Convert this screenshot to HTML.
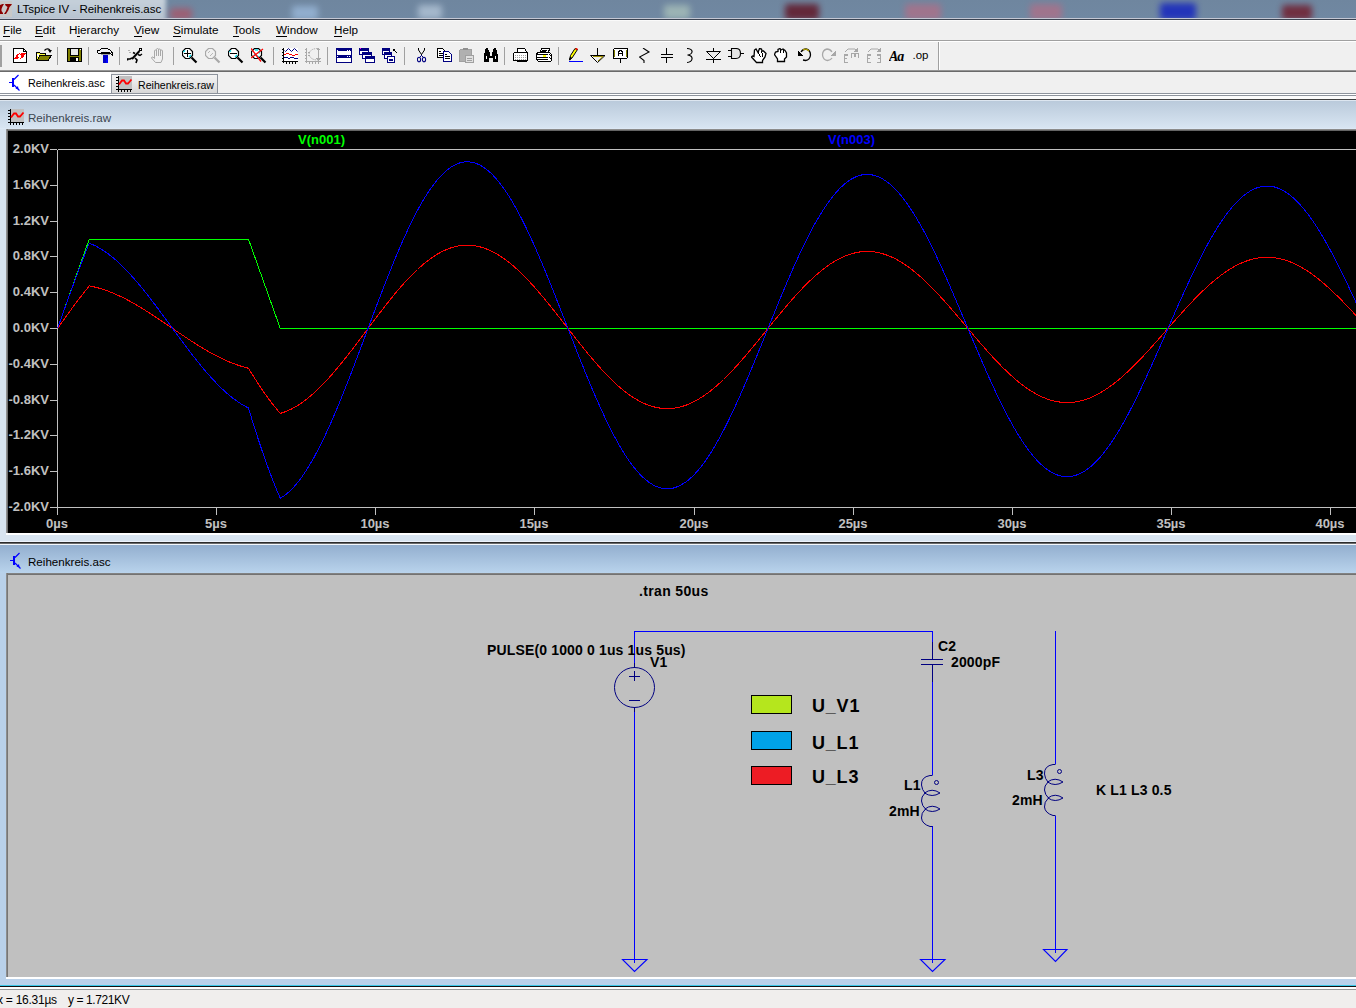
<!DOCTYPE html>
<html><head><meta charset="utf-8">
<style>
*{margin:0;padding:0;box-sizing:border-box}
html,body{width:1356px;height:1008px;overflow:hidden;background:#f0f0f0;font-family:"Liberation Sans",sans-serif}
.abs{position:absolute}
#title{left:0;top:0;width:1356px;height:18px;background:linear-gradient(180deg,#6f869f,#7088a2);overflow:hidden}
.blob{position:absolute;filter:blur(3px);border-radius:3px}
#titletxt{left:17px;top:2px;font-size:11.5px;color:#000;white-space:pre;line-height:14px}
#menubar{left:0;top:20px;width:1356px;height:20px;background:#f0f0f0}
.mi{position:absolute;top:2.9px;font-size:11.7px;line-height:11px;color:#000;white-space:pre}
.mi u{text-decoration:none;border-bottom:1px solid #000}
#toolbar{left:0;top:41px;width:1356px;height:29px;background:#f0f0f0}
.sep{position:absolute;top:6px;width:1px;height:19px;background:#a0a0a0;border-right:1px solid #fff}
.ic{position:absolute;top:7px;width:16px;height:16px}
#tabs{left:0;top:72px;width:1356px;height:21px;background:#f0f0f0}
.yl{position:absolute;left:0;width:49px;text-align:right;font-size:13px;font-weight:bold;color:#c0c0c0;line-height:16px;white-space:pre}
.xl{position:absolute;top:516px;width:80px;text-align:center;font-size:13px;font-weight:bold;color:#c0c0c0;line-height:16px;white-space:pre}
.st{position:absolute;font-size:14px;font-weight:bold;color:#000;white-space:pre;line-height:16px;letter-spacing:0.15px}
</style></head><body>
<!-- title bar -->
<div id="title" class="abs">
  <div class="abs" style="left:-10px;top:-4px;width:176px;height:26px;background:linear-gradient(180deg,#c9d3dd,#b4c1ce);filter:blur(2px)"></div>
  <div class="blob" style="left:170px;top:8px;width:22px;height:12px;background:#c04050;opacity:.55"></div>
  <div class="blob" style="left:292px;top:6px;width:26px;height:14px;background:#a8c8ec;opacity:.6"></div>
  <div class="blob" style="left:418px;top:5px;width:24px;height:14px;background:#c8d8e8;opacity:.6"></div>
  <div class="blob" style="left:664px;top:5px;width:26px;height:14px;background:#c8e0c8;opacity:.5"></div>
  <div class="blob" style="left:785px;top:4px;width:34px;height:16px;background:#601020;opacity:.8"></div>
  <div class="blob" style="left:905px;top:4px;width:36px;height:16px;background:#c06880;opacity:.6"></div>
  <div class="blob" style="left:1030px;top:4px;width:32px;height:16px;background:#c06880;opacity:.6"></div>
  <div class="blob" style="left:1160px;top:3px;width:36px;height:17px;background:#1020c0;opacity:.8"></div>
  <div class="blob" style="left:1282px;top:5px;width:30px;height:15px;background:#701828;opacity:.8"></div>
  <div class="abs" style="left:0;top:1px;width:12px;height:16px;background:#c8c8c8"></div>
  <svg class="abs" style="left:0;top:0" width="13" height="18" viewBox="0 0 13 18"><path d="M2.5,4 H4 L2.5,6.5 L1.5,9 V11 L3,13 V14 H0 V5 Z" fill="#8b0000"/><path d="M5,4 H12 L11,5.5 L9.5,7 L8.5,10 L6,14 H4 L6,11 L7.5,7 L5.5,5.5 Z" fill="#8b0000"/></svg>
  <div id="titletxt" class="abs">LTspice IV - Reihenkreis.asc</div>
</div>
<div class="abs" style="left:0;top:18px;width:1356px;height:1px;background:#c4c8d4"></div>
<div class="abs" style="left:0;top:19px;width:1356px;height:1px;background:#3c4452"></div>
<div class="abs" style="left:0;top:20px;width:1356px;height:1px;background:#fafafa"></div>
<!-- menu -->
<div id="menubar" class="abs" style="top:21px;height:19px">
  <div class="mi" style="left:3px"><u>F</u>ile</div>
  <div class="mi" style="left:35px"><u>E</u>dit</div>
  <div class="mi" style="left:69px">H<u>i</u>erarchy</div>
  <div class="mi" style="left:134px"><u>V</u>iew</div>
  <div class="mi" style="left:173px"><u>S</u>imulate</div>
  <div class="mi" style="left:233px"><u>T</u>ools</div>
  <div class="mi" style="left:276px"><u>W</u>indow</div>
  <div class="mi" style="left:334px"><u>H</u>elp</div>
</div>
<div class="abs" style="left:0;top:40px;width:1356px;height:1px;background:#a0a0a0"></div>
<div class="abs" style="left:0;top:41px;width:1356px;height:1px;background:#ffffff"></div>
<!-- toolbar -->
<div id="toolbar" class="abs" style="top:42px;height:28px">
<div class="abs" style="left:0;top:3px;width:2px;height:22px;background:#a0a0a0"></div>
<svg class="abs" style="left:13px;top:6px" width="16" height="16" viewBox="0 0 16 16" shape-rendering="crispEdges"><path d="M0.5,0.5 H10.5 L13.5,3.5 V14.5 H0.5 Z" fill="#fff" stroke="#000"/><path d="M10.5,0.5 V3.5 H13.5" fill="none" stroke="#000"/><rect x="6" y="5" width="1" height="1" fill="#ff0000"/><rect x="8" y="5" width="5" height="1" fill="#ff0000"/><rect x="4" y="6" width="2" height="1" fill="#ff0000"/><rect x="7" y="6" width="5" height="1" fill="#ff0000"/><rect x="3" y="7" width="2" height="1" fill="#ff0000"/><rect x="8" y="7" width="3" height="1" fill="#ff0000"/><rect x="3" y="8" width="2" height="1" fill="#ff0000"/><rect x="8" y="8" width="3" height="1" fill="#ff0000"/><rect x="2" y="9" width="4" height="1" fill="#ff0000"/><rect x="8" y="9" width="2" height="1" fill="#ff0000"/><rect x="1" y="10" width="4" height="1" fill="#ff0000"/><rect x="7" y="10" width="1" height="1" fill="#ff0000"/></svg>
<svg class="abs" style="left:36px;top:6px" width="16" height="16" viewBox="0 0 16 16" shape-rendering="crispEdges"><path d="M0.5,4.5 H3.5 L4.5,5.5 H9.5 V12.5 H0.5 Z" fill="#ffff40" stroke="#000"/><path d="M1,6 L3,10 M2,6 L3,8" stroke="#fff" fill="none"/><path d="M1,12.5 L4,7.5 H15.5 L12,12.5 Z" fill="#808000" stroke="#000"/><path d="M8.5,2.5 Q11,-0.5 14,2" fill="none" stroke="#000" stroke-width="1.2" shape-rendering="auto"/><path d="M12,2 H16 L14,5 Z" fill="#000" shape-rendering="auto"/></svg>
<div class="abs" style="left:57px;top:5px;width:1px;height:18px;background:#a0a0a0"></div>
<svg class="abs" style="left:67px;top:6px" width="16" height="16" viewBox="0 0 16 16" shape-rendering="crispEdges"><rect x="0.5" y="0.5" width="14" height="13" fill="#808000" stroke="#000"/><rect x="3" y="1" width="9" height="6" fill="#e8e8e8"/><path d="M3.5,1 V7.5 H11.5 V1" fill="none" stroke="#000"/><rect x="3" y="9" width="9" height="5" fill="#000"/><rect x="9" y="10" width="2" height="3" fill="#fff"/><rect x="13" y="1" width="1" height="1" fill="#fff"/></svg>
<div class="abs" style="left:88px;top:5px;width:1px;height:18px;background:#a0a0a0"></div>
<svg class="abs" style="left:97px;top:6px" width="16" height="16" viewBox="0 0 16 16" shape-rendering="crispEdges"><path d="M0.5,2.5 H2.5 L4.5,0.5 H10.5 L13,2 L15.5,5 V7.5 L12.5,4.5 H4.5 L3,5.5 H1.5 L0.5,4.5 Z" fill="#f4f4f4" stroke="#000"/><rect x="4" y="5" width="9" height="2" fill="#a0a0a0"/><path d="M4,5.5 H13" stroke="#000"/><rect x="6" y="7" width="5" height="8" fill="#0000c8"/><rect x="9" y="10" width="2" height="5" fill="#0000ff"/></svg>
<div class="abs" style="left:119px;top:5px;width:1px;height:18px;background:#a0a0a0"></div>
<svg class="abs" style="left:127px;top:6px" width="16" height="16" viewBox="0 0 16 16" shape-rendering="crispEdges"><path d="M12,0.5 H14.5 V2.5 H12 Z" fill="#fff" stroke="#000"/><path d="M12.5,3 L5,11" stroke="#000" stroke-width="2" shape-rendering="auto"/><path d="M8,5.5 L6,4.5" stroke="#000" stroke-width="1.6" shape-rendering="auto"/><path d="M11,6.5 L13,7.5 L15,6" stroke="#000" stroke-width="1.4" fill="none" shape-rendering="auto"/><path d="M5,10 L3,11 H0.5 V12.5" stroke="#000" stroke-width="1.6" fill="none" shape-rendering="auto"/><path d="M8,10 L10,12 L9,15" stroke="#000" stroke-width="1.6" fill="none" shape-rendering="auto"/><path d="M1,3 L3,2 M2,5 L4,4" stroke="#b0b0b0" fill="none"/></svg>
<svg class="abs" style="left:151px;top:6px" width="16" height="16" viewBox="0 0 16 16" shape-rendering="crispEdges"><path d="M4.5,14.5 L0.5,10 L1,9 L2,9 L3.5,10.5 V3 Q3.5,2 4.5,2 Q5.5,2 5.5,3 V1.5 Q5.5,0.5 6.5,0.5 Q7.5,0.5 7.5,1.5 V2 Q7.5,1 8.5,1 Q9.5,1 9.5,2 V3 Q9.5,2 10.5,2 Q11.5,2 11.5,3 V11 L10,14.5 Z M5.5,3 V8 M7.5,2 V8 M9.5,3 V8" fill="none" stroke="#a8a8a8" shape-rendering="auto"/></svg>
<div class="abs" style="left:173px;top:5px;width:1px;height:18px;background:#a0a0a0"></div>
<svg class="abs" style="left:182px;top:6px" width="16" height="16" viewBox="0 0 16 16" shape-rendering="crispEdges"><path d="M3.5,0.5 H7.5 L10.5,3.5 V7.5 L7.5,10.5 H3.5 L0.5,7.5 V3.5 Z" fill="#fff" stroke="#000" stroke-width="1.2" shape-rendering="auto"/><path d="M2,5.5 H9 M5.5,2 V9" stroke="#000" stroke-width="1.2"/><path d="M1.5,4 L3,2.5 M7,9 L9,7" stroke="#00e0f0" stroke-width="1.2" shape-rendering="auto"/><path d="M9.5,9.5 L14.5,14.5" stroke="#000" stroke-width="2.2" shape-rendering="auto"/></svg>
<svg class="abs" style="left:205px;top:6px" width="16" height="16" viewBox="0 0 16 16" shape-rendering="crispEdges"><path d="M3.5,0.5 H7.5 L10.5,3.5 V7.5 L7.5,10.5 H3.5 L0.5,7.5 V3.5 Z" fill="none" stroke="#a8a8a8" stroke-width="1.2" shape-rendering="auto"/><path d="M3,5 L5,3 M5,8 L8,5" stroke="#b8b8b8" shape-rendering="auto"/><path d="M9.5,9.5 L14.5,14.5" stroke="#a8a8a8" stroke-width="2.2" shape-rendering="auto"/></svg>
<svg class="abs" style="left:228px;top:6px" width="16" height="16" viewBox="0 0 16 16" shape-rendering="crispEdges"><path d="M3.5,0.5 H7.5 L10.5,3.5 V7.5 L7.5,10.5 H3.5 L0.5,7.5 V3.5 Z" fill="#fff" stroke="#000" stroke-width="1.2" shape-rendering="auto"/><path d="M2,5.5 H9" stroke="#000" stroke-width="1.4"/><path d="M1.5,4 L3,2.5 M7,9 L9,7" stroke="#00e0f0" stroke-width="1.2" shape-rendering="auto"/><path d="M9.5,9.5 L14.5,14.5" stroke="#000" stroke-width="2.2" shape-rendering="auto"/></svg>
<svg class="abs" style="left:251px;top:6px" width="16" height="16" viewBox="0 0 16 16" shape-rendering="crispEdges"><path d="M3.5,0.5 H7.5 L10.5,3.5 V7.5 L7.5,10.5 H3.5 L0.5,7.5 V3.5 Z" fill="#fff" stroke="#000" stroke-width="1.2" shape-rendering="auto"/><path d="M4,2 L7,2 M3,6 L8,9 M7,4 L9,5" stroke="#00e0f0" stroke-width="1.4" shape-rendering="auto"/><path d="M0,0.5 L10,13.5 M12,1 L0,10" stroke="#ff0000" stroke-width="1.3" shape-rendering="auto"/><path d="M9.5,9.5 L14.5,14.5" stroke="#000" stroke-width="2.2" shape-rendering="auto"/></svg>
<div class="abs" style="left:273px;top:5px;width:1px;height:18px;background:#a0a0a0"></div>
<svg class="abs" style="left:282px;top:6px" width="16" height="16" viewBox="0 0 16 16" shape-rendering="crispEdges"><rect x="2" y="0" width="14" height="13" fill="#fff"/><path d="M1.5,0 V14.5 M0,13.5 H16" stroke="#000" stroke-width="1.4"/><path d="M0,1.5 H1 M0,4.5 H1 M0,7.5 H1 M0,10.5 H1 M4.5,14 V15.5 M7.5,14 V15.5 M10.5,14 V15.5 M13.5,14 V15.5" stroke="#000"/><path d="M2.5,2.5 L3.5,3.5 L6.5,0.5 L9.5,3.5 L12.5,0.5 L15.5,3.5" stroke="#000080" fill="none" shape-rendering="auto"/><path d="M2,6 H4 V5 H7 V6 H10 V7 H13 V6 H16 V7 H13 V8 H10 V7 H7 V6 H4 V7 H2 Z" fill="#ff0000"/><path d="M2,9 H6 V10 H8 V9 H12 V10 H16 V11 H12 V10 H8 V11 H6 V10 H2 Z" fill="#000080"/></svg>
<svg class="abs" style="left:305px;top:6px" width="16" height="16" viewBox="0 0 16 16" shape-rendering="crispEdges"><path d="M1.5,0 V14.5 M0,13.5 H16" stroke="#a8a8a8" stroke-width="1.4"/><path d="M0,1.5 H1 M0,4.5 H1 M0,7.5 H1 M0,10.5 H1 M4.5,14 V15.5 M7.5,14 V15.5 M10.5,14 V15.5 M13.5,14 V15.5" stroke="#a8a8a8"/><path d="M13,0.5 Q5,0.5 4,6 Q5,12 13,12" stroke="#a8a8a8" fill="none" stroke-dasharray="1.5,1" shape-rendering="auto"/><path d="M13.5,0.5 V12 M11.5,2.5 L13.5,0.5 L15.5,2.5 M11.5,10 L13.5,12 L15.5,10 M3,5 L4,4 L5,5 M3,7 L4,8 L5,7" stroke="#a8a8a8" fill="none" stroke-width="1.2"/></svg>
<div class="abs" style="left:327px;top:5px;width:1px;height:18px;background:#a0a0a0"></div>
<svg class="abs" style="left:336px;top:6px" width="16" height="16" viewBox="0 0 16 16" shape-rendering="crispEdges"><rect x="0.5" y="0.5" width="15" height="14" fill="#fff" stroke="#000080"/><rect x="1" y="1" width="14" height="2" fill="#000080"/><rect x="1" y="7" width="14" height="3" fill="#000080"/><path d="M1.5,8 V9 M13.5,8 V9 M11.5,8 V9" stroke="#fff"/><path d="M1.5,1.5 V2.5 M13.5,1.5 V2.5 M11.5,1.5 V2.5" stroke="#fff"/></svg>
<svg class="abs" style="left:359px;top:6px" width="16" height="16" viewBox="0 0 16 16" shape-rendering="crispEdges"><rect x="0.5" y="0.5" width="9" height="6" fill="#fff" stroke="#000080"/><rect x="1" y="1" width="8" height="2" fill="#000080"/><rect x="3.5" y="4.5" width="9" height="6" fill="#fff" stroke="#000080"/><rect x="4" y="5" width="8" height="2" fill="#000080"/><rect x="6.5" y="8.5" width="9" height="6" fill="#fff" stroke="#000080"/><rect x="7" y="9" width="8" height="2" fill="#000080"/><rect x="1" y="0" width="1" height="1" fill="#f0f"/></svg>
<svg class="abs" style="left:382px;top:6px" width="16" height="16" viewBox="0 0 16 16" shape-rendering="crispEdges"><rect x="0.5" y="0.5" width="7" height="6" fill="#fff" stroke="#000080"/><rect x="1" y="1" width="6" height="2" fill="#000080"/><rect x="2.5" y="4.5" width="7" height="6" fill="#fff" stroke="#000080"/><rect x="3" y="5" width="6" height="2" fill="#000080"/><rect x="5.5" y="8.5" width="7" height="6" fill="#fff" stroke="#000080"/><rect x="7" y="11" width="4" height="2" fill="#000080"/><path d="M11,1 L15,5 M11,1 H13 M11,1 V3" stroke="#000" fill="none"/></svg>
<div class="abs" style="left:404px;top:5px;width:1px;height:18px;background:#a0a0a0"></div>
<svg class="abs" style="left:417px;top:6px" width="16" height="16" viewBox="0 0 16 16" shape-rendering="crispEdges"><path d="M1.5,0 V2 L4.5,6.5 L7.5,2 V0" stroke="#000" fill="none" shape-rendering="auto"/><path d="M4.5,6 V8" stroke="#000"/><ellipse cx="2" cy="11.5" rx="1.6" ry="2.3" fill="none" stroke="#000080" stroke-width="1.1" shape-rendering="auto"/><ellipse cx="7" cy="11.5" rx="1.6" ry="2.3" fill="none" stroke="#000080" stroke-width="1.1" shape-rendering="auto"/><path d="M3,9 L4.5,7.5 L6,9" stroke="#000080" fill="none"/></svg>
<svg class="abs" style="left:437px;top:6px" width="16" height="16" viewBox="0 0 16 16" shape-rendering="crispEdges"><path d="M0.5,0.5 H5.5 L7.5,2.5 V9.5 H0.5 Z" fill="#fff" stroke="#000"/><path d="M2,3.5 H4 M2,5.5 H6 M2,7.5 H6" stroke="#000"/><path d="M6.5,3.5 H11.5 L14.5,6.5 V13.5 H6.5 Z" fill="#fff" stroke="#000080"/><path d="M8,6.5 H10 M8,8.5 H13 M8,10.5 H13" stroke="#000"/></svg>
<svg class="abs" style="left:459px;top:6px" width="16" height="16" viewBox="0 0 16 16" shape-rendering="crispEdges"><rect x="0.5" y="1.5" width="12" height="12" rx="1.5" fill="#b0b0b0" stroke="#a0a0a0"/><rect x="4" y="0" width="5" height="2" fill="#909090"/><rect x="6.5" y="7.5" width="8" height="7" fill="#e0e0e0" stroke="#a0a0a0"/><path d="M8,10.5 H13 M8,12.5 H13" stroke="#a0a0a0"/></svg>
<svg class="abs" style="left:483px;top:6px" width="16" height="16" viewBox="0 0 16 16" shape-rendering="crispEdges"><path d="M2,3 L3,0 H5 L6,3 L7,5 V8 H9 V5 L10,3 L11,0 H13 L14,3 L15,8 V14 H10 V10 H6 V14 H1 V8 Z" fill="#000"/><path d="M3.5,8 V11 M12.5,8 V11 M7.5,6 V7" stroke="#fff"/></svg>
<div class="abs" style="left:504px;top:5px;width:1px;height:18px;background:#a0a0a0"></div>
<svg class="abs" style="left:513px;top:6px" width="16" height="16" viewBox="0 0 16 16" shape-rendering="crispEdges"><path d="M4.5,0.5 H11.5 L13.5,3.5 V4.5 H4.5 Z" fill="#fff" stroke="#000"/><path d="M1.5,4.5 H14.5 V12.5 H0.5 V6 Z" fill="#fff" stroke="#000"/><path d="M2,7 H14 M2,9 H14 M2,11 H14" stroke="#a0a0a0" stroke-dasharray="1,1"/><rect x="4" y="13" width="10" height="1" fill="#000"/></svg>
<svg class="abs" style="left:536px;top:6px" width="16" height="16" viewBox="0 0 16 16" shape-rendering="crispEdges"><path d="M4,4.5 L5.5,0.5 H13.5 V1.5 L12,4.5" fill="#fff" stroke="#000"/><path d="M6,2.5 H11 M5,3.5 H10" stroke="#000"/><path d="M1.5,4.5 H13.5 L15.5,6.5 V12.5 L14,13.5 H2.5 L0.5,11.5 V6.5 Z" fill="#fff" stroke="#000"/><path d="M1,6.5 H12 M1,9.5 H12 M1,11.5 H12" stroke="#000"/><rect x="7" y="7" width="3" height="2" fill="#ffff00"/><path d="M13,6 L15,8 M13,9 L15,11" stroke="#000" stroke-dasharray="1,1"/></svg>
<div class="abs" style="left:558px;top:5px;width:1px;height:18px;background:#a0a0a0"></div>
<svg class="abs" style="left:569px;top:6px" width="16" height="16" viewBox="0 0 16 16" shape-rendering="crispEdges"><path d="M0.5,12 L1.5,7.5 L6,0.5 L8.5,1.5 L3,10 Z" fill="#ffff00" stroke="#000" shape-rendering="auto"/><path d="M6.5,0.5 L8.5,1.5" stroke="#f00" stroke-width="1.5" shape-rendering="auto"/><path d="M0.5,12 L2,9" stroke="#000" stroke-width="1.5" shape-rendering="auto"/><path d="M0,13.5 H14" stroke="#0000ff"/></svg>
<svg class="abs" style="left:590px;top:6px" width="16" height="16" viewBox="0 0 16 16" shape-rendering="crispEdges"><path d="M7.5,0 V7" stroke="#000"/><path d="M0.5,7.5 H15 L7.5,14.5 Z" fill="none" stroke="#000" shape-rendering="auto"/><path d="M3,8.5 H13 L8,13" fill="none" stroke="#a09000" shape-rendering="auto"/></svg>
<svg class="abs" style="left:613px;top:6px" width="16" height="16" viewBox="0 0 16 16" shape-rendering="crispEdges"><rect x="0.5" y="0.5" width="14" height="10" rx="1.5" fill="#fff" stroke="#000"/><rect x="1" y="2" width="1" height="7" fill="#808000"/><rect x="13" y="2" width="1" height="7" fill="#808000"/><path d="M5.5,8 V4 L7.5,2.5 L9.5,4 V8 M5.5,5.5 H9.5" stroke="#000" fill="none" stroke-width="1.3"/><path d="M7.5,11 V15" stroke="#000"/></svg>
<svg class="abs" style="left:639px;top:6px" width="16" height="16" viewBox="0 0 16 16" shape-rendering="crispEdges"><path d="M4,0 L10,4 L0.5,9 L5,12.5 V15" stroke="#000" fill="none" stroke-width="1.1" shape-rendering="auto"/></svg>
<svg class="abs" style="left:661px;top:6px" width="16" height="16" viewBox="0 0 16 16" shape-rendering="crispEdges"><path d="M5.5,0 V6 M5.5,9 V15 M0,6.5 H12 M0,9.5 H12" stroke="#000" stroke-width="1.2"/></svg>
<svg class="abs" style="left:687px;top:6px" width="16" height="16" viewBox="0 0 16 16" shape-rendering="crispEdges"><path d="M0,0.5 Q5.5,1 5,4 Q4.5,6.5 0.5,7 Q5.5,7.5 5,11 Q4.5,14 0,14.5" stroke="#000" fill="none" stroke-width="1.2" shape-rendering="auto"/></svg>
<svg class="abs" style="left:706px;top:6px" width="16" height="16" viewBox="0 0 16 16" shape-rendering="crispEdges"><path d="M7.5,0 V15 M0,11.5 H15" stroke="#000"/><path d="M0.5,3.5 H14.5 L7.5,10.5 Z" fill="#e8e8e8" stroke="#000" shape-rendering="auto"/></svg>
<svg class="abs" style="left:728px;top:6px" width="16" height="16" viewBox="0 0 16 16" shape-rendering="crispEdges"><path d="M3.5,0.5 H8 Q12.5,0.5 12.5,5.5 Q12.5,10.5 8,10.5 H3.5 Z" fill="#e4e4e4" stroke="#000" stroke-width="1.1" shape-rendering="auto"/><path d="M0,2.5 H3 M0,8.5 H3 M12.5,5.5 H16" stroke="#000"/></svg>
<svg class="abs" style="left:751px;top:6px" width="16" height="16" viewBox="0 0 16 16" shape-rendering="crispEdges"><path d="M5.5,14.5 L0.5,9 L1.5,8 L3,8.5 L3.5,2 L5,1 L7,4.5 L8.5,0.5 L10.5,1 L11,3 L12.5,3 L15,5.5 L14,9 L11.5,12.5 V14.5 Z" fill="#fff" stroke="#000" stroke-width="1.3" shape-rendering="auto"/><path d="M7,4.5 L9.5,9 M10.5,3 L12,9" stroke="#000" fill="none"/></svg>
<svg class="abs" style="left:774px;top:6px" width="16" height="16" viewBox="0 0 16 16" shape-rendering="crispEdges"><path d="M3.5,13.5 V11 L0.5,6.5 L1.5,4 L4,3.5 V1.5 L6,0.5 L7,2 L9,1 L11,2.5 L12.5,5 V9 L10.5,11 V13.5 Z" fill="#fff" stroke="#000" stroke-width="1.3" shape-rendering="auto"/><path d="M6,2 V5 M9,2 V5" stroke="#000"/></svg>
<svg class="abs" style="left:797px;top:6px" width="16" height="16" viewBox="0 0 16 16" shape-rendering="crispEdges"><path d="M4,4 Q6,1 9,1 Q13.5,2 13.5,7 Q13,12 8.5,12.5 L6,12" stroke="#000" fill="none" stroke-width="1.3" shape-rendering="auto"/><path d="M6,2 Q9,0 12,3" stroke="#b0a000" fill="none" stroke-width="1.3" shape-rendering="auto"/><path d="M0.5,2.5 V7.5 H5.5 Z" fill="#000"/></svg>
<svg class="abs" style="left:820px;top:6px" width="16" height="16" viewBox="0 0 16 16" shape-rendering="crispEdges"><path d="M12,4 Q10,1 7,1 Q2.5,2 2.5,7 Q3,12 7.5,12.5 Q11,12 12,10" stroke="#a8a8a8" fill="none" stroke-width="1.3" shape-rendering="auto"/><path d="M15.5,2.5 V7.5 H10.5 Z" fill="#a8a8a8"/></svg>
<svg class="abs" style="left:843px;top:6px" width="16" height="16" viewBox="0 0 16 16" shape-rendering="crispEdges"><path d="M5,7 H1.5 V14.5 H5 M1.5,10.5 H4" stroke="#a8a8a8" fill="none" stroke-width="1.6"/><path d="M8.5,10 V5.5 H15.5 V10 M12,5.5 V8.5" stroke="#a8a8a8" fill="none" stroke-width="1.6"/><path d="M2,4 L5,1 H12 L13,2" stroke="#a8a8a8" fill="none" shape-rendering="auto"/><path d="M11,3.5 H15 V0 Z" fill="#a8a8a8"/></svg>
<svg class="abs" style="left:866px;top:6px" width="16" height="16" viewBox="0 0 16 16" shape-rendering="crispEdges"><path d="M5,7 H1.5 V14.5 H5 M1.5,10.5 H4" stroke="#a8a8a8" fill="none" stroke-width="1.6"/><path d="M11,7 H14.5 V14.5 H11 M14.5,10.5 H12" stroke="#a8a8a8" fill="none" stroke-width="1.6"/><path d="M2,4 L5,1 H12 L13,2" stroke="#a8a8a8" fill="none" shape-rendering="auto"/><path d="M11,3.5 H15 V0 Z" fill="#a8a8a8"/></svg>
<svg class="abs" style="left:889px;top:6px" width="16" height="16" viewBox="0 0 16 16" shape-rendering="crispEdges"><text x="0" y="13" font-family="Liberation Serif" font-style="italic" font-weight="bold" font-size="14" fill="#000" shape-rendering="auto" letter-spacing="-1.2">Aa</text></svg>
<svg class="abs" style="left:912px;top:6px" width="18" height="16" viewBox="0 0 18 16" shape-rendering="crispEdges"><text x="0.5" y="11" font-family="Liberation Sans" font-size="11.5" fill="#000" shape-rendering="auto">.op</text></svg>
<div class="abs" style="left:938px;top:0;width:1px;height:28px;background:#a0a0a0"></div><div class="abs" style="left:939px;top:0;width:1px;height:28px;background:#fff"></div>
</div>
<div class="abs" style="left:0;top:70px;width:1356px;height:1px;background:#959595"></div>
<div class="abs" style="left:0;top:71px;width:1356px;height:1px;background:#6a6a6a"></div>
<!-- tabs -->
<div id="tabs" class="abs">
<div class="abs" style="left:0;top:0;width:111px;height:23px;background:#fff"></div><svg class="abs" style="left:8px;top:2px" width="13" height="17" viewBox="0 0 13 17" shape-rendering="crispEdges"><rect x="4" y="4" width="2" height="9" fill="#0000ff"/><path d="M1,8.5 H4" stroke="#0000ff" stroke-width="1.2"/><path d="M6,5.5 L10.5,1 M6,11 L11.5,16.5" stroke="#0000ff" stroke-width="1.2" shape-rendering="auto"/><path d="M7.5,14.5 L10.5,15.5 L10,12 Z" fill="#0000ff" shape-rendering="auto"/></svg><div class="abs" style="left:28px;top:5px;font-size:10.8px;line-height:13px;color:#000;white-space:pre">Reihenkreis.asc</div><div class="abs" style="left:111px;top:2px;width:107px;height:19px;background:linear-gradient(180deg,#f4f4f4,#d8d8d8);border:1px solid #8d939c;border-bottom:none"></div><svg class="abs" style="left:116px;top:3px" width="17" height="17" viewBox="0 0 17 17" shape-rendering="crispEdges"><rect x="3" y="1" width="13" height="13" fill="#c0c0c0"/><path d="M2.5,1 V15 M0,14.5 H16" stroke="#000" fill="none"/><path d="M0,2.5 H2 M0,5.5 H2 M0,8.5 H2 M0,11.5 H2 M2.5,15 V17 M5.5,15 V17 M8.5,15 V17 M11.5,15 V17 M14.5,15 V17" stroke="#000"/><path d="M3,9.5 L6,5.5 H8 L10,8.5 H12 L15.5,4.5" stroke="#ff0000" stroke-width="1.8" fill="none" shape-rendering="auto"/></svg><div class="abs" style="left:138px;top:7px;font-size:10.6px;line-height:13px;color:#000;white-space:pre">Reihenkreis.raw</div>
</div>
<div class="abs" style="left:0;top:93px;width:1356px;height:1px;background:#8d939c"></div>
<div class="abs" style="left:0;top:94px;width:1356px;height:1px;background:#ffffff"></div>
<div class="abs" style="left:0;top:95px;width:1356px;height:1px;background:#8d939c"></div>
<div class="abs" style="left:0;top:96px;width:1356px;height:3px;background:#fbfbfb"></div>
<div class="abs" style="left:0;top:99px;width:1356px;height:1px;background:#404040"></div>
<!-- plot child -->
<div class="abs" style="left:0;top:100px;width:1356px;height:1px;background:#dde6f0"></div>
<div class="abs" style="left:0;top:101px;width:1356px;height:27px;background:linear-gradient(180deg,#bacadb,#d8e5f2)"></div>
<div class="abs" style="left:0;top:128px;width:1356px;height:1px;background:#dce8f5"></div>
<div class="abs" style="left:0;top:129px;width:1356px;height:406px;background:#d8e4f0"></div>
<div class="abs" style="left:6px;top:129px;width:1350px;height:2px;background:linear-gradient(180deg,#a0a0a0,#505050)"></div>
<div class="abs" style="left:6px;top:129px;width:2px;height:404px;background:linear-gradient(90deg,#a0a0a0,#606060)"></div>
<div class="abs" style="left:6px;top:533px;width:1350px;height:2px;background:#ffffff"></div>
<svg class="abs" style="left:8px;top:108px" width="17" height="17" viewBox="0 0 17 17" shape-rendering="crispEdges"><rect x="3" y="1" width="13" height="13" fill="#c0c0c0"/><path d="M2.5,1 V15 M0,14.5 H16" stroke="#000" fill="none"/><path d="M0,2.5 H2 M0,5.5 H2 M0,8.5 H2 M0,11.5 H2 M2.5,15 V17 M5.5,15 V17 M8.5,15 V17 M11.5,15 V17 M14.5,15 V17" stroke="#000"/><path d="M3,9.5 L6,5.5 H8 L10,8.5 H12 L15.5,4.5" stroke="#ff0000" stroke-width="1.8" fill="none" shape-rendering="auto"/></svg>
<div class="abs" style="left:28px;top:110.8px;font-size:11.6px;line-height:14px;color:#3c4650;white-space:pre">Reihenkreis.raw</div>
<div class="abs" style="left:8px;top:131px;width:1348px;height:402px;background:#000;overflow:hidden">
  <svg class="abs" style="left:-8px;top:-131px" width="1356" height="540" shape-rendering="crispEdges">
  <path d="M57.5,149.5 H1356 M57.5,507.5 H1356 M57.5,149.5 V514" stroke="#c0c0c0" stroke-width="1" fill="none"/>
<path d="M50,149.5 H57" stroke="#c0c0c0" stroke-width="1"/>
<path d="M50,185.5 H57" stroke="#c0c0c0" stroke-width="1"/>
<path d="M50,221.5 H57" stroke="#c0c0c0" stroke-width="1"/>
<path d="M50,256.5 H57" stroke="#c0c0c0" stroke-width="1"/>
<path d="M50,292.5 H57" stroke="#c0c0c0" stroke-width="1"/>
<path d="M50,328.5 H57" stroke="#c0c0c0" stroke-width="1"/>
<path d="M50,364.5 H57" stroke="#c0c0c0" stroke-width="1"/>
<path d="M50,400.5 H57" stroke="#c0c0c0" stroke-width="1"/>
<path d="M50,435.5 H57" stroke="#c0c0c0" stroke-width="1"/>
<path d="M50,471.5 H57" stroke="#c0c0c0" stroke-width="1"/>
<path d="M50,507.5 H57" stroke="#c0c0c0" stroke-width="1"/>
<path d="M57.5,507 V515" stroke="#c0c0c0" stroke-width="1"/>
<path d="M216.5,507 V515" stroke="#c0c0c0" stroke-width="1"/>
<path d="M375.5,507 V515" stroke="#c0c0c0" stroke-width="1"/>
<path d="M534.5,507 V515" stroke="#c0c0c0" stroke-width="1"/>
<path d="M694.5,507 V515" stroke="#c0c0c0" stroke-width="1"/>
<path d="M853.5,507 V515" stroke="#c0c0c0" stroke-width="1"/>
<path d="M1012.5,507 V515" stroke="#c0c0c0" stroke-width="1"/>
<path d="M1171.5,507 V515" stroke="#c0c0c0" stroke-width="1"/>
<path d="M1330.5,507 V515" stroke="#c0c0c0" stroke-width="1"/>
<path d="M57.5,328.5 L89.3,239.0 L248.4,239.0 L280.3,328.5 L1360,328.5" stroke="#00ff00" stroke-width="1" fill="none"/>
<path d="M57.5,328.5 L58.5,327.1 L59.5,325.7 L60.5,324.3 L61.5,322.9 L62.5,321.5 L63.5,320.1 L64.5,318.7 L65.5,317.3 L66.5,315.9 L67.5,314.5 L68.5,313.1 L69.5,311.8 L70.5,310.4 L71.5,309.0 L72.5,307.7 L73.5,306.3 L74.5,305.0 L75.5,303.6 L76.5,302.3 L77.5,300.9 L78.5,299.6 L79.5,298.3 L80.5,297.0 L81.5,295.7 L82.5,294.4 L83.5,293.1 L84.5,291.9 L85.5,290.6 L86.5,289.3 L87.5,288.1 L88.5,286.9 L89.3,285.9 L89.5,285.9 L90.5,286.1 L91.5,286.3 L92.5,286.5 L93.5,286.7 L94.5,287.0 L95.5,287.2 L96.5,287.5 L97.5,287.7 L98.5,288.0 L99.5,288.3 L100.5,288.6 L101.5,288.9 L102.5,289.2 L103.5,289.5 L104.5,289.9 L105.5,290.2 L106.5,290.6 L107.5,290.9 L108.5,291.3 L109.5,291.7 L110.5,292.1 L111.5,292.5 L112.5,292.9 L113.5,293.3 L114.5,293.7 L115.5,294.2 L116.5,294.6 L117.5,295.1 L118.5,295.5 L119.5,296.0 L120.5,296.5 L121.5,296.9 L122.5,297.4 L123.5,297.9 L124.5,298.4 L125.5,298.9 L126.5,299.4 L127.5,300.0 L128.5,300.5 L129.5,301.0 L130.5,301.6 L131.5,302.1 L132.5,302.7 L133.5,303.3 L134.5,303.8 L135.5,304.4 L136.5,305.0 L137.5,305.6 L138.5,306.2 L139.5,306.8 L140.5,307.4 L141.5,308.0 L142.5,308.6 L143.5,309.2 L144.5,309.8 L145.5,310.5 L146.5,311.1 L147.5,311.7 L148.5,312.4 L149.5,313.0 L150.5,313.6 L151.5,314.3 L152.5,314.9 L153.5,315.6 L154.5,316.3 L155.5,316.9 L156.5,317.6 L157.5,318.2 L158.5,318.9 L159.5,319.6 L160.5,320.3 L161.5,320.9 L162.5,321.6 L163.5,322.3 L164.5,323.0 L165.5,323.6 L166.5,324.3 L167.5,325.0 L168.5,325.7 L169.5,326.4 L170.5,327.1 L171.5,327.7 L172.5,328.4 L173.5,329.1 L174.5,329.8 L175.5,330.5 L176.5,331.1 L177.5,331.8 L178.5,332.5 L179.5,333.2 L180.5,333.9 L181.5,334.5 L182.5,335.2 L183.5,335.9 L184.5,336.5 L185.5,337.2 L186.5,337.9 L187.5,338.5 L188.5,339.2 L189.5,339.8 L190.5,340.5 L191.5,341.1 L192.5,341.8 L193.5,342.4 L194.5,343.1 L195.5,343.7 L196.5,344.3 L197.5,345.0 L198.5,345.6 L199.5,346.2 L200.5,346.8 L201.5,347.4 L202.5,348.0 L203.5,348.6 L204.5,349.2 L205.5,349.8 L206.5,350.4 L207.5,351.0 L208.5,351.5 L209.5,352.1 L210.5,352.7 L211.5,353.2 L212.5,353.8 L213.5,354.3 L214.5,354.8 L215.5,355.4 L216.5,355.9 L217.5,356.4 L218.5,356.9 L219.5,357.4 L220.5,357.9 L221.5,358.4 L222.5,358.9 L223.5,359.3 L224.5,359.8 L225.5,360.2 L226.5,360.7 L227.5,361.1 L228.5,361.6 L229.5,362.0 L230.5,362.4 L231.5,362.8 L232.5,363.2 L233.5,363.6 L234.5,363.9 L235.5,364.3 L236.5,364.7 L237.5,365.0 L238.5,365.4 L239.5,365.7 L240.5,366.0 L241.5,366.3 L242.5,366.6 L243.5,366.9 L244.5,367.2 L245.5,367.5 L246.5,367.8 L247.5,368.0 L248.4,368.2 L248.5,368.3 L249.5,370.0 L250.5,371.6 L251.5,373.2 L252.5,374.8 L253.5,376.4 L254.5,378.0 L255.5,379.6 L256.5,381.1 L257.5,382.7 L258.5,384.2 L259.5,385.7 L260.5,387.2 L261.5,388.7 L262.5,390.2 L263.5,391.6 L264.5,393.1 L265.5,394.5 L266.5,395.9 L267.5,397.3 L268.5,398.7 L269.5,400.0 L270.5,401.3 L271.5,402.7 L272.5,404.0 L273.5,405.2 L274.5,406.5 L275.5,407.7 L276.5,408.9 L277.5,410.1 L278.5,411.3 L279.5,412.5 L280.3,413.4 L280.5,413.3 L281.5,413.0 L282.5,412.7 L283.5,412.4 L284.5,412.0 L285.5,411.6 L286.5,411.2 L287.5,410.8 L288.5,410.4 L289.5,409.9 L290.5,409.5 L291.5,409.0 L292.5,408.4 L293.5,407.9 L294.5,407.4 L295.5,406.8 L296.5,406.2 L297.5,405.6 L298.5,405.0 L299.5,404.3 L300.5,403.6 L301.5,403.0 L302.5,402.3 L303.5,401.5 L304.5,400.8 L305.5,400.0 L306.5,399.3 L307.5,398.5 L308.5,397.7 L309.5,396.8 L310.5,396.0 L311.5,395.1 L312.5,394.3 L313.5,393.4 L314.5,392.5 L315.5,391.6 L316.5,390.6 L317.5,389.7 L318.5,388.7 L319.5,387.7 L320.5,386.7 L321.5,385.7 L322.5,384.7 L323.5,383.7 L324.5,382.6 L325.5,381.6 L326.5,380.5 L327.5,379.4 L328.5,378.3 L329.5,377.2 L330.5,376.1 L331.5,374.9 L332.5,373.8 L333.5,372.6 L334.5,371.5 L335.5,370.3 L336.5,369.1 L337.5,367.9 L338.5,366.7 L339.5,365.5 L340.5,364.3 L341.5,363.0 L342.5,361.8 L343.5,360.6 L344.5,359.3 L345.5,358.0 L346.5,356.8 L347.5,355.5 L348.5,354.2 L349.5,352.9 L350.5,351.7 L351.5,350.4 L352.5,349.1 L353.5,347.7 L354.5,346.4 L355.5,345.1 L356.5,343.8 L357.5,342.5 L358.5,341.2 L359.5,339.8 L360.5,338.5 L361.5,337.2 L362.5,335.8 L363.5,334.5 L364.5,333.2 L365.5,331.8 L366.5,330.5 L367.5,329.2 L368.5,327.8 L369.5,326.5 L370.5,325.2 L371.5,323.8 L372.5,322.5 L373.5,321.2 L374.5,319.9 L375.5,318.5 L376.5,317.2 L377.5,315.9 L378.5,314.6 L379.5,313.3 L380.5,312.0 L381.5,310.7 L382.5,309.4 L383.5,308.1 L384.5,306.8 L385.5,305.5 L386.5,304.2 L387.5,303.0 L388.5,301.7 L389.5,300.5 L390.5,299.2 L391.5,298.0 L392.5,296.7 L393.5,295.5 L394.5,294.3 L395.5,293.1 L396.5,291.9 L397.5,290.7 L398.5,289.6 L399.5,288.4 L400.5,287.2 L401.5,286.1 L402.5,285.0 L403.5,283.8 L404.5,282.7 L405.5,281.6 L406.5,280.5 L407.5,279.5 L408.5,278.4 L409.5,277.4 L410.5,276.3 L411.5,275.3 L412.5,274.3 L413.5,273.3 L414.5,272.3 L415.5,271.3 L416.5,270.4 L417.5,269.5 L418.5,268.5 L419.5,267.6 L420.5,266.7 L421.5,265.9 L422.5,265.0 L423.5,264.1 L424.5,263.3 L425.5,262.5 L426.5,261.7 L427.5,260.9 L428.5,260.2 L429.5,259.4 L430.5,258.7 L431.5,258.0 L432.5,257.3 L433.5,256.6 L434.5,256.0 L435.5,255.3 L436.5,254.7 L437.5,254.1 L438.5,253.5 L439.5,253.0 L440.5,252.4 L441.5,251.9 L442.5,251.4 L443.5,250.9 L444.5,250.4 L445.5,250.0 L446.5,249.5 L447.5,249.1 L448.5,248.7 L449.5,248.4 L450.5,248.0 L451.5,247.7 L452.5,247.4 L453.5,247.1 L454.5,246.8 L455.5,246.6 L456.5,246.3 L457.5,246.1 L458.5,245.9 L459.5,245.8 L460.5,245.6 L461.5,245.5 L462.5,245.4 L463.5,245.3 L464.5,245.2 L465.5,245.2 L466.5,245.2 L467.5,245.2 L468.5,245.2 L469.5,245.2 L470.5,245.3 L471.5,245.4 L472.5,245.5 L473.5,245.6 L474.5,245.7 L475.5,245.9 L476.5,246.1 L477.5,246.3 L478.5,246.5 L479.5,246.7 L480.5,247.0 L481.5,247.3 L482.5,247.6 L483.5,247.9 L484.5,248.2 L485.5,248.6 L486.5,249.0 L487.5,249.4 L488.5,249.8 L489.5,250.2 L490.5,250.7 L491.5,251.1 L492.5,251.6 L493.5,252.2 L494.5,252.7 L495.5,253.2 L496.5,253.8 L497.5,254.4 L498.5,255.0 L499.5,255.6 L500.5,256.3 L501.5,256.9 L502.5,257.6 L503.5,258.3 L504.5,259.0 L505.5,259.7 L506.5,260.5 L507.5,261.2 L508.5,262.0 L509.5,262.8 L510.5,263.6 L511.5,264.4 L512.5,265.3 L513.5,266.1 L514.5,267.0 L515.5,267.9 L516.5,268.8 L517.5,269.7 L518.5,270.6 L519.5,271.6 L520.5,272.5 L521.5,273.5 L522.5,274.5 L523.5,275.5 L524.5,276.5 L525.5,277.5 L526.5,278.5 L527.5,279.6 L528.5,280.6 L529.5,281.7 L530.5,282.8 L531.5,283.9 L532.5,285.0 L533.5,286.1 L534.5,287.2 L535.5,288.3 L536.5,289.5 L537.5,290.6 L538.5,291.8 L539.5,293.0 L540.5,294.1 L541.5,295.3 L542.5,296.5 L543.5,297.7 L544.5,298.9 L545.5,300.1 L546.5,301.3 L547.5,302.6 L548.5,303.8 L549.5,305.0 L550.5,306.3 L551.5,307.5 L552.5,308.8 L553.5,310.0 L554.5,311.3 L555.5,312.5 L556.5,313.8 L557.5,315.1 L558.5,316.4 L559.5,317.6 L560.5,318.9 L561.5,320.2 L562.5,321.5 L563.5,322.7 L564.5,324.0 L565.5,325.3 L566.5,326.6 L567.5,327.9 L568.5,329.2 L569.5,330.5 L570.5,331.7 L571.5,333.0 L572.5,334.3 L573.5,335.6 L574.5,336.8 L575.5,338.1 L576.5,339.4 L577.5,340.7 L578.5,341.9 L579.5,343.2 L580.5,344.4 L581.5,345.7 L582.5,346.9 L583.5,348.2 L584.5,349.4 L585.5,350.6 L586.5,351.9 L587.5,353.1 L588.5,354.3 L589.5,355.5 L590.5,356.7 L591.5,357.9 L592.5,359.1 L593.5,360.2 L594.5,361.4 L595.5,362.6 L596.5,363.7 L597.5,364.8 L598.5,366.0 L599.5,367.1 L600.5,368.2 L601.5,369.3 L602.5,370.4 L603.5,371.5 L604.5,372.5 L605.5,373.6 L606.5,374.6 L607.5,375.7 L608.5,376.7 L609.5,377.7 L610.5,378.7 L611.5,379.7 L612.5,380.6 L613.5,381.6 L614.5,382.5 L615.5,383.5 L616.5,384.4 L617.5,385.3 L618.5,386.2 L619.5,387.0 L620.5,387.9 L621.5,388.8 L622.5,389.6 L623.5,390.4 L624.5,391.2 L625.5,392.0 L626.5,392.7 L627.5,393.5 L628.5,394.2 L629.5,394.9 L630.5,395.6 L631.5,396.3 L632.5,397.0 L633.5,397.6 L634.5,398.3 L635.5,398.9 L636.5,399.5 L637.5,400.0 L638.5,400.6 L639.5,401.1 L640.5,401.7 L641.5,402.2 L642.5,402.7 L643.5,403.1 L644.5,403.6 L645.5,404.0 L646.5,404.4 L647.5,404.8 L648.5,405.2 L649.5,405.6 L650.5,405.9 L651.5,406.2 L652.5,406.5 L653.5,406.8 L654.5,407.0 L655.5,407.3 L656.5,407.5 L657.5,407.7 L658.5,407.9 L659.5,408.0 L660.5,408.2 L661.5,408.3 L662.5,408.4 L663.5,408.5 L664.5,408.6 L665.5,408.6 L666.5,408.6 L667.5,408.6 L668.5,408.6 L669.5,408.6 L670.5,408.5 L671.5,408.4 L672.5,408.3 L673.5,408.2 L674.5,408.1 L675.5,407.9 L676.5,407.8 L677.5,407.6 L678.5,407.4 L679.5,407.1 L680.5,406.9 L681.5,406.6 L682.5,406.3 L683.5,406.0 L684.5,405.7 L685.5,405.3 L686.5,405.0 L687.5,404.6 L688.5,404.2 L689.5,403.8 L690.5,403.3 L691.5,402.9 L692.5,402.4 L693.5,401.9 L694.5,401.4 L695.5,400.9 L696.5,400.3 L697.5,399.7 L698.5,399.2 L699.5,398.6 L700.5,397.9 L701.5,397.3 L702.5,396.7 L703.5,396.0 L704.5,395.3 L705.5,394.6 L706.5,393.9 L707.5,393.2 L708.5,392.4 L709.5,391.6 L710.5,390.9 L711.5,390.1 L712.5,389.3 L713.5,388.4 L714.5,387.6 L715.5,386.8 L716.5,385.9 L717.5,385.0 L718.5,384.1 L719.5,383.2 L720.5,382.3 L721.5,381.4 L722.5,380.4 L723.5,379.5 L724.5,378.5 L725.5,377.5 L726.5,376.5 L727.5,375.5 L728.5,374.5 L729.5,373.5 L730.5,372.4 L731.5,371.4 L732.5,370.3 L733.5,369.3 L734.5,368.2 L735.5,367.1 L736.5,366.0 L737.5,364.9 L738.5,363.8 L739.5,362.7 L740.5,361.5 L741.5,360.4 L742.5,359.2 L743.5,358.1 L744.5,356.9 L745.5,355.8 L746.5,354.6 L747.5,353.4 L748.5,352.2 L749.5,351.0 L750.5,349.9 L751.5,348.7 L752.5,347.4 L753.5,346.2 L754.5,345.0 L755.5,343.8 L756.5,342.6 L757.5,341.4 L758.5,340.2 L759.5,338.9 L760.5,337.7 L761.5,336.5 L762.5,335.2 L763.5,334.0 L764.5,332.8 L765.5,331.5 L766.5,330.3 L767.5,329.1 L768.5,327.8 L769.5,326.6 L770.5,325.4 L771.5,324.1 L772.5,322.9 L773.5,321.7 L774.5,320.5 L775.5,319.2 L776.5,318.0 L777.5,316.8 L778.5,315.6 L779.5,314.4 L780.5,313.2 L781.5,312.0 L782.5,310.8 L783.5,309.6 L784.5,308.4 L785.5,307.2 L786.5,306.0 L787.5,304.8 L788.5,303.7 L789.5,302.5 L790.5,301.4 L791.5,300.2 L792.5,299.1 L793.5,298.0 L794.5,296.8 L795.5,295.7 L796.5,294.6 L797.5,293.5 L798.5,292.5 L799.5,291.4 L800.5,290.3 L801.5,289.3 L802.5,288.2 L803.5,287.2 L804.5,286.1 L805.5,285.1 L806.5,284.1 L807.5,283.1 L808.5,282.1 L809.5,281.2 L810.5,280.2 L811.5,279.3 L812.5,278.3 L813.5,277.4 L814.5,276.5 L815.5,275.6 L816.5,274.7 L817.5,273.9 L818.5,273.0 L819.5,272.2 L820.5,271.4 L821.5,270.6 L822.5,269.8 L823.5,269.0 L824.5,268.2 L825.5,267.5 L826.5,266.7 L827.5,266.0 L828.5,265.3 L829.5,264.6 L830.5,263.9 L831.5,263.3 L832.5,262.6 L833.5,262.0 L834.5,261.4 L835.5,260.8 L836.5,260.3 L837.5,259.7 L838.5,259.2 L839.5,258.6 L840.5,258.1 L841.5,257.7 L842.5,257.2 L843.5,256.7 L844.5,256.3 L845.5,255.9 L846.5,255.5 L847.5,255.1 L848.5,254.8 L849.5,254.4 L850.5,254.1 L851.5,253.8 L852.5,253.5 L853.5,253.2 L854.5,253.0 L855.5,252.7 L856.5,252.5 L857.5,252.3 L858.5,252.2 L859.5,252.0 L860.5,251.9 L861.5,251.8 L862.5,251.7 L863.5,251.6 L864.5,251.5 L865.5,251.5 L866.5,251.5 L867.5,251.5 L868.5,251.5 L869.5,251.5 L870.5,251.6 L871.5,251.6 L872.5,251.7 L873.5,251.8 L874.5,252.0 L875.5,252.1 L876.5,252.3 L877.5,252.5 L878.5,252.7 L879.5,252.9 L880.5,253.1 L881.5,253.4 L882.5,253.7 L883.5,254.0 L884.5,254.3 L885.5,254.6 L886.5,255.0 L887.5,255.4 L888.5,255.7 L889.5,256.1 L890.5,256.6 L891.5,257.0 L892.5,257.5 L893.5,257.9 L894.5,258.4 L895.5,258.9 L896.5,259.5 L897.5,260.0 L898.5,260.6 L899.5,261.2 L900.5,261.7 L901.5,262.4 L902.5,263.0 L903.5,263.6 L904.5,264.3 L905.5,265.0 L906.5,265.6 L907.5,266.3 L908.5,267.1 L909.5,267.8 L910.5,268.5 L911.5,269.3 L912.5,270.1 L913.5,270.9 L914.5,271.7 L915.5,272.5 L916.5,273.3 L917.5,274.2 L918.5,275.0 L919.5,275.9 L920.5,276.8 L921.5,277.7 L922.5,278.6 L923.5,279.5 L924.5,280.5 L925.5,281.4 L926.5,282.4 L927.5,283.3 L928.5,284.3 L929.5,285.3 L930.5,286.3 L931.5,287.3 L932.5,288.3 L933.5,289.3 L934.5,290.4 L935.5,291.4 L936.5,292.5 L937.5,293.5 L938.5,294.6 L939.5,295.7 L940.5,296.8 L941.5,297.9 L942.5,299.0 L943.5,300.1 L944.5,301.2 L945.5,302.3 L946.5,303.4 L947.5,304.6 L948.5,305.7 L949.5,306.8 L950.5,308.0 L951.5,309.2 L952.5,310.3 L953.5,311.5 L954.5,312.6 L955.5,313.8 L956.5,315.0 L957.5,316.1 L958.5,317.3 L959.5,318.5 L960.5,319.7 L961.5,320.9 L962.5,322.1 L963.5,323.2 L964.5,324.4 L965.5,325.6 L966.5,326.8 L967.5,328.0 L968.5,329.2 L969.5,330.4 L970.5,331.5 L971.5,332.7 L972.5,333.9 L973.5,335.1 L974.5,336.3 L975.5,337.4 L976.5,338.6 L977.5,339.8 L978.5,341.0 L979.5,342.1 L980.5,343.3 L981.5,344.4 L982.5,345.6 L983.5,346.7 L984.5,347.9 L985.5,349.0 L986.5,350.1 L987.5,351.3 L988.5,352.4 L989.5,353.5 L990.5,354.6 L991.5,355.7 L992.5,356.8 L993.5,357.9 L994.5,359.0 L995.5,360.0 L996.5,361.1 L997.5,362.1 L998.5,363.2 L999.5,364.2 L1000.5,365.2 L1001.5,366.3 L1002.5,367.3 L1003.5,368.3 L1004.5,369.2 L1005.5,370.2 L1006.5,371.2 L1007.5,372.1 L1008.5,373.1 L1009.5,374.0 L1010.5,374.9 L1011.5,375.8 L1012.5,376.7 L1013.5,377.6 L1014.5,378.5 L1015.5,379.4 L1016.5,380.2 L1017.5,381.0 L1018.5,381.9 L1019.5,382.7 L1020.5,383.5 L1021.5,384.2 L1022.5,385.0 L1023.5,385.7 L1024.5,386.5 L1025.5,387.2 L1026.5,387.9 L1027.5,388.6 L1028.5,389.3 L1029.5,389.9 L1030.5,390.6 L1031.5,391.2 L1032.5,391.8 L1033.5,392.4 L1034.5,393.0 L1035.5,393.6 L1036.5,394.1 L1037.5,394.7 L1038.5,395.2 L1039.5,395.7 L1040.5,396.2 L1041.5,396.6 L1042.5,397.1 L1043.5,397.5 L1044.5,397.9 L1045.5,398.3 L1046.5,398.7 L1047.5,399.1 L1048.5,399.4 L1049.5,399.7 L1050.5,400.1 L1051.5,400.3 L1052.5,400.6 L1053.5,400.9 L1054.5,401.1 L1055.5,401.3 L1056.5,401.5 L1057.5,401.7 L1058.5,401.9 L1059.5,402.0 L1060.5,402.2 L1061.5,402.3 L1062.5,402.4 L1063.5,402.5 L1064.5,402.5 L1065.5,402.5 L1066.5,402.6 L1067.5,402.6 L1068.5,402.6 L1069.5,402.5 L1070.5,402.5 L1071.5,402.4 L1072.5,402.3 L1073.5,402.2 L1074.5,402.1 L1075.5,401.9 L1076.5,401.8 L1077.5,401.6 L1078.5,401.4 L1079.5,401.2 L1080.5,400.9 L1081.5,400.7 L1082.5,400.4 L1083.5,400.1 L1084.5,399.8 L1085.5,399.5 L1086.5,399.2 L1087.5,398.8 L1088.5,398.4 L1089.5,398.1 L1090.5,397.7 L1091.5,397.2 L1092.5,396.8 L1093.5,396.3 L1094.5,395.9 L1095.5,395.4 L1096.5,394.9 L1097.5,394.3 L1098.5,393.8 L1099.5,393.2 L1100.5,392.7 L1101.5,392.1 L1102.5,391.5 L1103.5,390.9 L1104.5,390.2 L1105.5,389.6 L1106.5,388.9 L1107.5,388.2 L1108.5,387.6 L1109.5,386.8 L1110.5,386.1 L1111.5,385.4 L1112.5,384.6 L1113.5,383.9 L1114.5,383.1 L1115.5,382.3 L1116.5,381.5 L1117.5,380.7 L1118.5,379.9 L1119.5,379.0 L1120.5,378.2 L1121.5,377.3 L1122.5,376.5 L1123.5,375.6 L1124.5,374.7 L1125.5,373.8 L1126.5,372.8 L1127.5,371.9 L1128.5,371.0 L1129.5,370.0 L1130.5,369.1 L1131.5,368.1 L1132.5,367.1 L1133.5,366.1 L1134.5,365.1 L1135.5,364.1 L1136.5,363.1 L1137.5,362.1 L1138.5,361.1 L1139.5,360.0 L1140.5,359.0 L1141.5,357.9 L1142.5,356.9 L1143.5,355.8 L1144.5,354.7 L1145.5,353.7 L1146.5,352.6 L1147.5,351.5 L1148.5,350.4 L1149.5,349.3 L1150.5,348.2 L1151.5,347.1 L1152.5,346.0 L1153.5,344.9 L1154.5,343.7 L1155.5,342.6 L1156.5,341.5 L1157.5,340.4 L1158.5,339.2 L1159.5,338.1 L1160.5,337.0 L1161.5,335.8 L1162.5,334.7 L1163.5,333.5 L1164.5,332.4 L1165.5,331.3 L1166.5,330.1 L1167.5,329.0 L1168.5,327.8 L1169.5,326.7 L1170.5,325.6 L1171.5,324.4 L1172.5,323.3 L1173.5,322.1 L1174.5,321.0 L1175.5,319.9 L1176.5,318.7 L1177.5,317.6 L1178.5,316.5 L1179.5,315.4 L1180.5,314.3 L1181.5,313.2 L1182.5,312.1 L1183.5,310.9 L1184.5,309.8 L1185.5,308.8 L1186.5,307.7 L1187.5,306.6 L1188.5,305.5 L1189.5,304.4 L1190.5,303.4 L1191.5,302.3 L1192.5,301.3 L1193.5,300.2 L1194.5,299.2 L1195.5,298.2 L1196.5,297.1 L1197.5,296.1 L1198.5,295.1 L1199.5,294.1 L1200.5,293.2 L1201.5,292.2 L1202.5,291.2 L1203.5,290.2 L1204.5,289.3 L1205.5,288.4 L1206.5,287.4 L1207.5,286.5 L1208.5,285.6 L1209.5,284.7 L1210.5,283.8 L1211.5,283.0 L1212.5,282.1 L1213.5,281.2 L1214.5,280.4 L1215.5,279.6 L1216.5,278.8 L1217.5,278.0 L1218.5,277.2 L1219.5,276.4 L1220.5,275.6 L1221.5,274.9 L1222.5,274.2 L1223.5,273.4 L1224.5,272.7 L1225.5,272.0 L1226.5,271.4 L1227.5,270.7 L1228.5,270.0 L1229.5,269.4 L1230.5,268.8 L1231.5,268.2 L1232.5,267.6 L1233.5,267.0 L1234.5,266.5 L1235.5,265.9 L1236.5,265.4 L1237.5,264.9 L1238.5,264.4 L1239.5,263.9 L1240.5,263.4 L1241.5,263.0 L1242.5,262.6 L1243.5,262.1 L1244.5,261.7 L1245.5,261.4 L1246.5,261.0 L1247.5,260.6 L1248.5,260.3 L1249.5,260.0 L1250.5,259.7 L1251.5,259.4 L1252.5,259.1 L1253.5,258.9 L1254.5,258.7 L1255.5,258.5 L1256.5,258.3 L1257.5,258.1 L1258.5,257.9 L1259.5,257.8 L1260.5,257.7 L1261.5,257.6 L1262.5,257.5 L1263.5,257.4 L1264.5,257.3 L1265.5,257.3 L1266.5,257.3 L1267.5,257.3 L1268.5,257.3 L1269.5,257.3 L1270.5,257.4 L1271.5,257.4 L1272.5,257.5 L1273.5,257.6 L1274.5,257.8 L1275.5,257.9 L1276.5,258.1 L1277.5,258.2 L1278.5,258.4 L1279.5,258.6 L1280.5,258.8 L1281.5,259.1 L1282.5,259.3 L1283.5,259.6 L1284.5,259.9 L1285.5,260.2 L1286.5,260.6 L1287.5,260.9 L1288.5,261.3 L1289.5,261.6 L1290.5,262.0 L1291.5,262.4 L1292.5,262.9 L1293.5,263.3 L1294.5,263.8 L1295.5,264.2 L1296.5,264.7 L1297.5,265.2 L1298.5,265.7 L1299.5,266.3 L1300.5,266.8 L1301.5,267.4 L1302.5,268.0 L1303.5,268.6 L1304.5,269.2 L1305.5,269.8 L1306.5,270.4 L1307.5,271.1 L1308.5,271.7 L1309.5,272.4 L1310.5,273.1 L1311.5,273.8 L1312.5,274.5 L1313.5,275.3 L1314.5,276.0 L1315.5,276.8 L1316.5,277.5 L1317.5,278.3 L1318.5,279.1 L1319.5,279.9 L1320.5,280.7 L1321.5,281.6 L1322.5,282.4 L1323.5,283.3 L1324.5,284.1 L1325.5,285.0 L1326.5,285.9 L1327.5,286.8 L1328.5,287.7 L1329.5,288.6 L1330.5,289.5 L1331.5,290.4 L1332.5,291.4 L1333.5,292.3 L1334.5,293.3 L1335.5,294.3 L1336.5,295.2 L1337.5,296.2 L1338.5,297.2 L1339.5,298.2 L1340.5,299.2 L1341.5,300.2 L1342.5,301.2 L1343.5,302.3 L1344.5,303.3 L1345.5,304.3 L1346.5,305.4 L1347.5,306.4 L1348.5,307.5 L1349.5,308.5 L1350.5,309.6 L1351.5,310.7 L1352.5,311.7 L1353.5,312.8 L1354.5,313.9 L1355.5,315.0 L1356.5,316.0 L1357.5,317.1 L1358.5,318.2 L1359.5,319.3 L1360.5,320.4 L1361.5,321.5 L1362.5,322.6 L1363.5,323.7 L1364.5,324.8 L1365.5,325.9 L1366.5,327.0 L1367.5,328.1 L1368.5,329.2 L1369.5,330.3 L1370.5,331.4 L1371.5,332.5 L1372.5,333.5 L1373.5,334.6 L1374.5,335.7 L1375.5,336.8 L1376.5,337.9 L1377.5,339.0" stroke="#ff0000" stroke-width="1" fill="none"/>
<path d="M57.5,328.5 L58.5,325.7 L59.5,322.9 L60.5,320.1 L61.5,317.3 L62.5,314.5 L63.5,311.7 L64.5,308.9 L65.5,306.1 L66.5,303.3 L67.5,300.5 L68.5,297.8 L69.5,295.0 L70.5,292.3 L71.5,289.6 L72.5,286.8 L73.5,284.1 L74.5,281.4 L75.5,278.7 L76.5,276.1 L77.5,273.4 L78.5,270.7 L79.5,268.1 L80.5,265.5 L81.5,262.9 L82.5,260.3 L83.5,257.8 L84.5,255.2 L85.5,252.7 L86.5,250.2 L87.5,247.7 L88.5,245.2 L89.3,243.2 L89.5,243.3 L90.5,243.7 L91.5,244.1 L92.5,244.5 L93.5,245.0 L94.5,245.4 L95.5,245.9 L96.5,246.4 L97.5,247.0 L98.5,247.5 L99.5,248.1 L100.5,248.7 L101.5,249.3 L102.5,249.9 L103.5,250.6 L104.5,251.3 L105.5,252.0 L106.5,252.7 L107.5,253.4 L108.5,254.1 L109.5,254.9 L110.5,255.7 L111.5,256.5 L112.5,257.3 L113.5,258.1 L114.5,259.0 L115.5,259.8 L116.5,260.7 L117.5,261.6 L118.5,262.5 L119.5,263.5 L120.5,264.4 L121.5,265.4 L122.5,266.3 L123.5,267.3 L124.5,268.3 L125.5,269.4 L126.5,270.4 L127.5,271.4 L128.5,272.5 L129.5,273.6 L130.5,274.7 L131.5,275.8 L132.5,276.9 L133.5,278.0 L134.5,279.2 L135.5,280.3 L136.5,281.5 L137.5,282.6 L138.5,283.8 L139.5,285.0 L140.5,286.2 L141.5,287.4 L142.5,288.7 L143.5,289.9 L144.5,291.2 L145.5,292.4 L146.5,293.7 L147.5,294.9 L148.5,296.2 L149.5,297.5 L150.5,298.8 L151.5,300.1 L152.5,301.4 L153.5,302.7 L154.5,304.0 L155.5,305.3 L156.5,306.7 L157.5,308.0 L158.5,309.3 L159.5,310.7 L160.5,312.0 L161.5,313.4 L162.5,314.7 L163.5,316.1 L164.5,317.4 L165.5,318.8 L166.5,320.1 L167.5,321.5 L168.5,322.9 L169.5,324.2 L170.5,325.6 L171.5,327.0 L172.5,328.3 L173.5,329.7 L174.5,331.1 L175.5,332.4 L176.5,333.8 L177.5,335.1 L178.5,336.5 L179.5,337.9 L180.5,339.2 L181.5,340.6 L182.5,341.9 L183.5,343.2 L184.5,344.6 L185.5,345.9 L186.5,347.2 L187.5,348.6 L188.5,349.9 L189.5,351.2 L190.5,352.5 L191.5,353.8 L192.5,355.1 L193.5,356.4 L194.5,357.6 L195.5,358.9 L196.5,360.2 L197.5,361.4 L198.5,362.7 L199.5,363.9 L200.5,365.1 L201.5,366.4 L202.5,367.6 L203.5,368.8 L204.5,369.9 L205.5,371.1 L206.5,372.3 L207.5,373.4 L208.5,374.6 L209.5,375.7 L210.5,376.8 L211.5,377.9 L212.5,379.0 L213.5,380.1 L214.5,381.2 L215.5,382.2 L216.5,383.3 L217.5,384.3 L218.5,385.3 L219.5,386.3 L220.5,387.3 L221.5,388.3 L222.5,389.2 L223.5,390.2 L224.5,391.1 L225.5,392.0 L226.5,392.9 L227.5,393.7 L228.5,394.6 L229.5,395.4 L230.5,396.3 L231.5,397.1 L232.5,397.9 L233.5,398.6 L234.5,399.4 L235.5,400.1 L236.5,400.8 L237.5,401.5 L238.5,402.2 L239.5,402.9 L240.5,403.5 L241.5,404.2 L242.5,404.8 L243.5,405.4 L244.5,405.9 L245.5,406.5 L246.5,407.0 L247.5,407.5 L248.4,408.0 L248.5,408.2 L249.5,411.4 L250.5,414.7 L251.5,417.9 L252.5,421.2 L253.5,424.3 L254.5,427.5 L255.5,430.7 L256.5,433.8 L257.5,436.9 L258.5,439.9 L259.5,442.9 L260.5,445.9 L261.5,448.9 L262.5,451.9 L263.5,454.8 L264.5,457.6 L265.5,460.5 L266.5,463.3 L267.5,466.1 L268.5,468.8 L269.5,471.5 L270.5,474.2 L271.5,476.8 L272.5,479.4 L273.5,482.0 L274.5,484.5 L275.5,487.0 L276.5,489.4 L277.5,491.8 L278.5,494.1 L279.5,496.5 L280.3,498.2 L280.5,498.1 L281.5,497.5 L282.5,496.9 L283.5,496.2 L284.5,495.5 L285.5,494.8 L286.5,494.0 L287.5,493.1 L288.5,492.3 L289.5,491.4 L290.5,490.4 L291.5,489.4 L292.5,488.4 L293.5,487.3 L294.5,486.2 L295.5,485.1 L296.5,483.9 L297.5,482.7 L298.5,481.4 L299.5,480.1 L300.5,478.8 L301.5,477.4 L302.5,476.0 L303.5,474.6 L304.5,473.1 L305.5,471.6 L306.5,470.0 L307.5,468.4 L308.5,466.8 L309.5,465.2 L310.5,463.5 L311.5,461.8 L312.5,460.0 L313.5,458.3 L314.5,456.5 L315.5,454.6 L316.5,452.7 L317.5,450.8 L318.5,448.9 L319.5,447.0 L320.5,445.0 L321.5,443.0 L322.5,440.9 L323.5,438.8 L324.5,436.7 L325.5,434.6 L326.5,432.5 L327.5,430.3 L328.5,428.1 L329.5,425.9 L330.5,423.6 L331.5,421.4 L332.5,419.1 L333.5,416.8 L334.5,414.4 L335.5,412.1 L336.5,409.7 L337.5,407.3 L338.5,404.9 L339.5,402.5 L340.5,400.1 L341.5,397.6 L342.5,395.1 L343.5,392.6 L344.5,390.1 L345.5,387.6 L346.5,385.1 L347.5,382.5 L348.5,380.0 L349.5,377.4 L350.5,374.8 L351.5,372.2 L352.5,369.6 L353.5,367.0 L354.5,364.4 L355.5,361.7 L356.5,359.1 L357.5,356.5 L358.5,353.8 L359.5,351.2 L360.5,348.5 L361.5,345.9 L362.5,343.2 L363.5,340.5 L364.5,337.9 L365.5,335.2 L366.5,332.5 L367.5,329.8 L368.5,327.2 L369.5,324.5 L370.5,321.8 L371.5,319.2 L372.5,316.5 L373.5,313.9 L374.5,311.2 L375.5,308.6 L376.5,305.9 L377.5,303.3 L378.5,300.7 L379.5,298.0 L380.5,295.4 L381.5,292.8 L382.5,290.2 L383.5,287.7 L384.5,285.1 L385.5,282.5 L386.5,280.0 L387.5,277.4 L388.5,274.9 L389.5,272.4 L390.5,269.9 L391.5,267.5 L392.5,265.0 L393.5,262.6 L394.5,260.1 L395.5,257.7 L396.5,255.3 L397.5,253.0 L398.5,250.6 L399.5,248.3 L400.5,246.0 L401.5,243.7 L402.5,241.4 L403.5,239.2 L404.5,237.0 L405.5,234.8 L406.5,232.6 L407.5,230.4 L408.5,228.3 L409.5,226.2 L410.5,224.1 L411.5,222.1 L412.5,220.1 L413.5,218.1 L414.5,216.1 L415.5,214.2 L416.5,212.3 L417.5,210.4 L418.5,208.6 L419.5,206.7 L420.5,205.0 L421.5,203.2 L422.5,201.5 L423.5,199.8 L424.5,198.1 L425.5,196.5 L426.5,194.9 L427.5,193.4 L428.5,191.8 L429.5,190.4 L430.5,188.9 L431.5,187.5 L432.5,186.1 L433.5,184.7 L434.5,183.4 L435.5,182.2 L436.5,180.9 L437.5,179.7 L438.5,178.5 L439.5,177.4 L440.5,176.3 L441.5,175.3 L442.5,174.3 L443.5,173.3 L444.5,172.3 L445.5,171.4 L446.5,170.6 L447.5,169.8 L448.5,169.0 L449.5,168.2 L450.5,167.5 L451.5,166.9 L452.5,166.3 L453.5,165.7 L454.5,165.1 L455.5,164.6 L456.5,164.2 L457.5,163.8 L458.5,163.4 L459.5,163.0 L460.5,162.8 L461.5,162.5 L462.5,162.3 L463.5,162.1 L464.5,162.0 L465.5,161.9 L466.5,161.8 L467.5,161.8 L468.5,161.9 L469.5,161.9 L470.5,162.1 L471.5,162.2 L472.5,162.4 L473.5,162.6 L474.5,162.9 L475.5,163.2 L476.5,163.6 L477.5,164.0 L478.5,164.4 L479.5,164.9 L480.5,165.4 L481.5,166.0 L482.5,166.6 L483.5,167.3 L484.5,167.9 L485.5,168.7 L486.5,169.4 L487.5,170.2 L488.5,171.1 L489.5,171.9 L490.5,172.8 L491.5,173.8 L492.5,174.8 L493.5,175.8 L494.5,176.9 L495.5,178.0 L496.5,179.1 L497.5,180.3 L498.5,181.5 L499.5,182.8 L500.5,184.0 L501.5,185.4 L502.5,186.7 L503.5,188.1 L504.5,189.5 L505.5,191.0 L506.5,192.5 L507.5,194.0 L508.5,195.5 L509.5,197.1 L510.5,198.7 L511.5,200.4 L512.5,202.1 L513.5,203.8 L514.5,205.5 L515.5,207.3 L516.5,209.1 L517.5,210.9 L518.5,212.8 L519.5,214.6 L520.5,216.6 L521.5,218.5 L522.5,220.5 L523.5,222.5 L524.5,224.5 L525.5,226.5 L526.5,228.6 L527.5,230.7 L528.5,232.8 L529.5,234.9 L530.5,237.1 L531.5,239.3 L532.5,241.5 L533.5,243.7 L534.5,245.9 L535.5,248.2 L536.5,250.5 L537.5,252.8 L538.5,255.1 L539.5,257.4 L540.5,259.8 L541.5,262.1 L542.5,264.5 L543.5,266.9 L544.5,269.3 L545.5,271.7 L546.5,274.2 L547.5,276.6 L548.5,279.1 L549.5,281.6 L550.5,284.0 L551.5,286.5 L552.5,289.0 L553.5,291.5 L554.5,294.1 L555.5,296.6 L556.5,299.1 L557.5,301.7 L558.5,304.2 L559.5,306.8 L560.5,309.3 L561.5,311.9 L562.5,314.4 L563.5,317.0 L564.5,319.6 L565.5,322.1 L566.5,324.7 L567.5,327.3 L568.5,329.8 L569.5,332.4 L570.5,335.0 L571.5,337.5 L572.5,340.1 L573.5,342.6 L574.5,345.2 L575.5,347.7 L576.5,350.3 L577.5,352.8 L578.5,355.3 L579.5,357.8 L580.5,360.4 L581.5,362.9 L582.5,365.3 L583.5,367.8 L584.5,370.3 L585.5,372.8 L586.5,375.2 L587.5,377.6 L588.5,380.1 L589.5,382.5 L590.5,384.9 L591.5,387.2 L592.5,389.6 L593.5,392.0 L594.5,394.3 L595.5,396.6 L596.5,398.9 L597.5,401.2 L598.5,403.4 L599.5,405.7 L600.5,407.9 L601.5,410.1 L602.5,412.3 L603.5,414.4 L604.5,416.6 L605.5,418.7 L606.5,420.8 L607.5,422.8 L608.5,424.9 L609.5,426.9 L610.5,428.9 L611.5,430.8 L612.5,432.8 L613.5,434.7 L614.5,436.6 L615.5,438.4 L616.5,440.3 L617.5,442.1 L618.5,443.9 L619.5,445.6 L620.5,447.3 L621.5,449.0 L622.5,450.7 L623.5,452.3 L624.5,453.9 L625.5,455.4 L626.5,457.0 L627.5,458.5 L628.5,459.9 L629.5,461.4 L630.5,462.8 L631.5,464.1 L632.5,465.5 L633.5,466.7 L634.5,468.0 L635.5,469.2 L636.5,470.4 L637.5,471.6 L638.5,472.7 L639.5,473.8 L640.5,474.8 L641.5,475.9 L642.5,476.8 L643.5,477.8 L644.5,478.7 L645.5,479.5 L646.5,480.4 L647.5,481.1 L648.5,481.9 L649.5,482.6 L650.5,483.3 L651.5,483.9 L652.5,484.5 L653.5,485.1 L654.5,485.6 L655.5,486.1 L656.5,486.5 L657.5,486.9 L658.5,487.3 L659.5,487.6 L660.5,487.9 L661.5,488.1 L662.5,488.3 L663.5,488.5 L664.5,488.6 L665.5,488.7 L666.5,488.7 L667.5,488.8 L668.5,488.7 L669.5,488.6 L670.5,488.5 L671.5,488.4 L672.5,488.2 L673.5,488.0 L674.5,487.7 L675.5,487.4 L676.5,487.0 L677.5,486.7 L678.5,486.2 L679.5,485.8 L680.5,485.3 L681.5,484.7 L682.5,484.1 L683.5,483.5 L684.5,482.9 L685.5,482.2 L686.5,481.4 L687.5,480.7 L688.5,479.9 L689.5,479.0 L690.5,478.1 L691.5,477.2 L692.5,476.3 L693.5,475.3 L694.5,474.3 L695.5,473.2 L696.5,472.1 L697.5,471.0 L698.5,469.8 L699.5,468.6 L700.5,467.4 L701.5,466.1 L702.5,464.8 L703.5,463.5 L704.5,462.1 L705.5,460.7 L706.5,459.3 L707.5,457.8 L708.5,456.3 L709.5,454.8 L710.5,453.2 L711.5,451.7 L712.5,450.0 L713.5,448.4 L714.5,446.7 L715.5,445.0 L716.5,443.3 L717.5,441.5 L718.5,439.7 L719.5,437.9 L720.5,436.1 L721.5,434.2 L722.5,432.3 L723.5,430.4 L724.5,428.5 L725.5,426.5 L726.5,424.5 L727.5,422.5 L728.5,420.5 L729.5,418.4 L730.5,416.4 L731.5,414.3 L732.5,412.1 L733.5,410.0 L734.5,407.9 L735.5,405.7 L736.5,403.5 L737.5,401.3 L738.5,399.1 L739.5,396.8 L740.5,394.5 L741.5,392.3 L742.5,390.0 L743.5,387.7 L744.5,385.4 L745.5,383.0 L746.5,380.7 L747.5,378.3 L748.5,376.0 L749.5,373.6 L750.5,371.2 L751.5,368.8 L752.5,366.4 L753.5,364.0 L754.5,361.6 L755.5,359.1 L756.5,356.7 L757.5,354.3 L758.5,351.8 L759.5,349.3 L760.5,346.9 L761.5,344.4 L762.5,342.0 L763.5,339.5 L764.5,337.0 L765.5,334.6 L766.5,332.1 L767.5,329.6 L768.5,327.2 L769.5,324.7 L770.5,322.2 L771.5,319.8 L772.5,317.3 L773.5,314.9 L774.5,312.4 L775.5,310.0 L776.5,307.5 L777.5,305.1 L778.5,302.6 L779.5,300.2 L780.5,297.8 L781.5,295.4 L782.5,293.0 L783.5,290.6 L784.5,288.3 L785.5,285.9 L786.5,283.5 L787.5,281.2 L788.5,278.9 L789.5,276.6 L790.5,274.3 L791.5,272.0 L792.5,269.7 L793.5,267.4 L794.5,265.2 L795.5,263.0 L796.5,260.8 L797.5,258.6 L798.5,256.4 L799.5,254.3 L800.5,252.1 L801.5,250.0 L802.5,247.9 L803.5,245.8 L804.5,243.8 L805.5,241.8 L806.5,239.7 L807.5,237.8 L808.5,235.8 L809.5,233.9 L810.5,231.9 L811.5,230.1 L812.5,228.2 L813.5,226.3 L814.5,224.5 L815.5,222.7 L816.5,221.0 L817.5,219.3 L818.5,217.6 L819.5,215.9 L820.5,214.2 L821.5,212.6 L822.5,211.0 L823.5,209.5 L824.5,207.9 L825.5,206.4 L826.5,205.0 L827.5,203.5 L828.5,202.1 L829.5,200.7 L830.5,199.4 L831.5,198.1 L832.5,196.8 L833.5,195.5 L834.5,194.3 L835.5,193.2 L836.5,192.0 L837.5,190.9 L838.5,189.8 L839.5,188.8 L840.5,187.8 L841.5,186.8 L842.5,185.9 L843.5,185.0 L844.5,184.1 L845.5,183.3 L846.5,182.5 L847.5,181.7 L848.5,181.0 L849.5,180.3 L850.5,179.7 L851.5,179.1 L852.5,178.5 L853.5,178.0 L854.5,177.5 L855.5,177.0 L856.5,176.6 L857.5,176.2 L858.5,175.8 L859.5,175.5 L860.5,175.3 L861.5,175.0 L862.5,174.8 L863.5,174.7 L864.5,174.6 L865.5,174.5 L866.5,174.4 L867.5,174.4 L868.5,174.5 L869.5,174.5 L870.5,174.6 L871.5,174.8 L872.5,175.0 L873.5,175.2 L874.5,175.4 L875.5,175.7 L876.5,176.1 L877.5,176.4 L878.5,176.9 L879.5,177.3 L880.5,177.8 L881.5,178.3 L882.5,178.9 L883.5,179.5 L884.5,180.1 L885.5,180.8 L886.5,181.5 L887.5,182.2 L888.5,183.0 L889.5,183.8 L890.5,184.6 L891.5,185.5 L892.5,186.4 L893.5,187.4 L894.5,188.4 L895.5,189.4 L896.5,190.4 L897.5,191.5 L898.5,192.7 L899.5,193.8 L900.5,195.0 L901.5,196.2 L902.5,197.5 L903.5,198.8 L904.5,200.1 L905.5,201.4 L906.5,202.8 L907.5,204.2 L908.5,205.6 L909.5,207.1 L910.5,208.6 L911.5,210.1 L912.5,211.7 L913.5,213.3 L914.5,214.9 L915.5,216.5 L916.5,218.2 L917.5,219.9 L918.5,221.6 L919.5,223.3 L920.5,225.1 L921.5,226.9 L922.5,228.7 L923.5,230.5 L924.5,232.4 L925.5,234.3 L926.5,236.2 L927.5,238.1 L928.5,240.1 L929.5,242.1 L930.5,244.1 L931.5,246.1 L932.5,248.1 L933.5,250.2 L934.5,252.2 L935.5,254.3 L936.5,256.4 L937.5,258.6 L938.5,260.7 L939.5,262.9 L940.5,265.0 L941.5,267.2 L942.5,269.4 L943.5,271.6 L944.5,273.9 L945.5,276.1 L946.5,278.4 L947.5,280.6 L948.5,282.9 L949.5,285.2 L950.5,287.5 L951.5,289.8 L952.5,292.1 L953.5,294.4 L954.5,296.8 L955.5,299.1 L956.5,301.4 L957.5,303.8 L958.5,306.1 L959.5,308.5 L960.5,310.9 L961.5,313.2 L962.5,315.6 L963.5,318.0 L964.5,320.3 L965.5,322.7 L966.5,325.1 L967.5,327.5 L968.5,329.8 L969.5,332.2 L970.5,334.6 L971.5,336.9 L972.5,339.3 L973.5,341.7 L974.5,344.0 L975.5,346.4 L976.5,348.7 L977.5,351.1 L978.5,353.4 L979.5,355.7 L980.5,358.1 L981.5,360.4 L982.5,362.7 L983.5,365.0 L984.5,367.2 L985.5,369.5 L986.5,371.8 L987.5,374.0 L988.5,376.3 L989.5,378.5 L990.5,380.7 L991.5,382.9 L992.5,385.1 L993.5,387.3 L994.5,389.4 L995.5,391.6 L996.5,393.7 L997.5,395.8 L998.5,397.9 L999.5,399.9 L1000.5,402.0 L1001.5,404.0 L1002.5,406.0 L1003.5,408.0 L1004.5,410.0 L1005.5,411.9 L1006.5,413.9 L1007.5,415.8 L1008.5,417.7 L1009.5,419.5 L1010.5,421.4 L1011.5,423.2 L1012.5,425.0 L1013.5,426.8 L1014.5,428.5 L1015.5,430.2 L1016.5,431.9 L1017.5,433.6 L1018.5,435.2 L1019.5,436.8 L1020.5,438.4 L1021.5,440.0 L1022.5,441.5 L1023.5,443.0 L1024.5,444.5 L1025.5,445.9 L1026.5,447.3 L1027.5,448.7 L1028.5,450.1 L1029.5,451.4 L1030.5,452.7 L1031.5,453.9 L1032.5,455.2 L1033.5,456.4 L1034.5,457.5 L1035.5,458.7 L1036.5,459.8 L1037.5,460.8 L1038.5,461.9 L1039.5,462.9 L1040.5,463.8 L1041.5,464.8 L1042.5,465.7 L1043.5,466.5 L1044.5,467.4 L1045.5,468.2 L1046.5,468.9 L1047.5,469.6 L1048.5,470.3 L1049.5,471.0 L1050.5,471.6 L1051.5,472.2 L1052.5,472.7 L1053.5,473.3 L1054.5,473.7 L1055.5,474.2 L1056.5,474.6 L1057.5,475.0 L1058.5,475.3 L1059.5,475.6 L1060.5,475.8 L1061.5,476.1 L1062.5,476.3 L1063.5,476.4 L1064.5,476.5 L1065.5,476.6 L1066.5,476.6 L1067.5,476.6 L1068.5,476.6 L1069.5,476.5 L1070.5,476.4 L1071.5,476.3 L1072.5,476.1 L1073.5,475.9 L1074.5,475.7 L1075.5,475.4 L1076.5,475.0 L1077.5,474.7 L1078.5,474.3 L1079.5,473.9 L1080.5,473.4 L1081.5,472.9 L1082.5,472.4 L1083.5,471.8 L1084.5,471.2 L1085.5,470.5 L1086.5,469.9 L1087.5,469.1 L1088.5,468.4 L1089.5,467.6 L1090.5,466.8 L1091.5,466.0 L1092.5,465.1 L1093.5,464.2 L1094.5,463.2 L1095.5,462.2 L1096.5,461.2 L1097.5,460.2 L1098.5,459.1 L1099.5,458.0 L1100.5,456.8 L1101.5,455.7 L1102.5,454.5 L1103.5,453.2 L1104.5,452.0 L1105.5,450.7 L1106.5,449.3 L1107.5,448.0 L1108.5,446.6 L1109.5,445.2 L1110.5,443.8 L1111.5,442.3 L1112.5,440.8 L1113.5,439.3 L1114.5,437.7 L1115.5,436.1 L1116.5,434.5 L1117.5,432.9 L1118.5,431.3 L1119.5,429.6 L1120.5,427.9 L1121.5,426.2 L1122.5,424.4 L1123.5,422.6 L1124.5,420.8 L1125.5,419.0 L1126.5,417.2 L1127.5,415.3 L1128.5,413.5 L1129.5,411.6 L1130.5,409.6 L1131.5,407.7 L1132.5,405.7 L1133.5,403.8 L1134.5,401.8 L1135.5,399.8 L1136.5,397.7 L1137.5,395.7 L1138.5,393.6 L1139.5,391.6 L1140.5,389.5 L1141.5,387.4 L1142.5,385.2 L1143.5,383.1 L1144.5,381.0 L1145.5,378.8 L1146.5,376.6 L1147.5,374.5 L1148.5,372.3 L1149.5,370.1 L1150.5,367.9 L1151.5,365.7 L1152.5,363.4 L1153.5,361.2 L1154.5,359.0 L1155.5,356.7 L1156.5,354.5 L1157.5,352.2 L1158.5,349.9 L1159.5,347.7 L1160.5,345.4 L1161.5,343.1 L1162.5,340.9 L1163.5,338.6 L1164.5,336.3 L1165.5,334.0 L1166.5,331.7 L1167.5,329.4 L1168.5,327.2 L1169.5,324.9 L1170.5,322.6 L1171.5,320.3 L1172.5,318.1 L1173.5,315.8 L1174.5,313.5 L1175.5,311.3 L1176.5,309.0 L1177.5,306.7 L1178.5,304.5 L1179.5,302.3 L1180.5,300.0 L1181.5,297.8 L1182.5,295.6 L1183.5,293.4 L1184.5,291.2 L1185.5,289.0 L1186.5,286.8 L1187.5,284.7 L1188.5,282.5 L1189.5,280.4 L1190.5,278.3 L1191.5,276.1 L1192.5,274.0 L1193.5,272.0 L1194.5,269.9 L1195.5,267.8 L1196.5,265.8 L1197.5,263.8 L1198.5,261.8 L1199.5,259.8 L1200.5,257.8 L1201.5,255.8 L1202.5,253.9 L1203.5,252.0 L1204.5,250.1 L1205.5,248.2 L1206.5,246.4 L1207.5,244.5 L1208.5,242.7 L1209.5,240.9 L1210.5,239.2 L1211.5,237.4 L1212.5,235.7 L1213.5,234.0 L1214.5,232.3 L1215.5,230.7 L1216.5,229.0 L1217.5,227.4 L1218.5,225.9 L1219.5,224.3 L1220.5,222.8 L1221.5,221.3 L1222.5,219.8 L1223.5,218.4 L1224.5,217.0 L1225.5,215.6 L1226.5,214.2 L1227.5,212.9 L1228.5,211.6 L1229.5,210.3 L1230.5,209.1 L1231.5,207.9 L1232.5,206.7 L1233.5,205.5 L1234.5,204.4 L1235.5,203.3 L1236.5,202.3 L1237.5,201.3 L1238.5,200.3 L1239.5,199.3 L1240.5,198.4 L1241.5,197.5 L1242.5,196.6 L1243.5,195.8 L1244.5,195.0 L1245.5,194.2 L1246.5,193.5 L1247.5,192.8 L1248.5,192.1 L1249.5,191.5 L1250.5,190.9 L1251.5,190.3 L1252.5,189.8 L1253.5,189.3 L1254.5,188.8 L1255.5,188.4 L1256.5,188.0 L1257.5,187.7 L1258.5,187.4 L1259.5,187.1 L1260.5,186.8 L1261.5,186.6 L1262.5,186.4 L1263.5,186.3 L1264.5,186.2 L1265.5,186.1 L1266.5,186.1 L1267.5,186.1 L1268.5,186.1 L1269.5,186.2 L1270.5,186.3 L1271.5,186.4 L1272.5,186.6 L1273.5,186.8 L1274.5,187.0 L1275.5,187.3 L1276.5,187.6 L1277.5,188.0 L1278.5,188.3 L1279.5,188.7 L1280.5,189.2 L1281.5,189.7 L1282.5,190.2 L1283.5,190.7 L1284.5,191.3 L1285.5,191.9 L1286.5,192.6 L1287.5,193.3 L1288.5,194.0 L1289.5,194.8 L1290.5,195.5 L1291.5,196.4 L1292.5,197.2 L1293.5,198.1 L1294.5,199.0 L1295.5,199.9 L1296.5,200.9 L1297.5,201.9 L1298.5,203.0 L1299.5,204.0 L1300.5,205.1 L1301.5,206.3 L1302.5,207.4 L1303.5,208.6 L1304.5,209.8 L1305.5,211.1 L1306.5,212.3 L1307.5,213.6 L1308.5,215.0 L1309.5,216.3 L1310.5,217.7 L1311.5,219.1 L1312.5,220.6 L1313.5,222.0 L1314.5,223.5 L1315.5,225.0 L1316.5,226.6 L1317.5,228.1 L1318.5,229.7 L1319.5,231.3 L1320.5,233.0 L1321.5,234.6 L1322.5,236.3 L1323.5,238.0 L1324.5,239.7 L1325.5,241.5 L1326.5,243.3 L1327.5,245.0 L1328.5,246.9 L1329.5,248.7 L1330.5,250.5 L1331.5,252.4 L1332.5,254.3 L1333.5,256.2 L1334.5,258.1 L1335.5,260.0 L1336.5,262.0 L1337.5,263.9 L1338.5,265.9 L1339.5,267.9 L1340.5,269.9 L1341.5,271.9 L1342.5,274.0 L1343.5,276.0 L1344.5,278.1 L1345.5,280.2 L1346.5,282.3 L1347.5,284.3 L1348.5,286.4 L1349.5,288.6 L1350.5,290.7 L1351.5,292.8 L1352.5,295.0 L1353.5,297.1 L1354.5,299.3 L1355.5,301.4 L1356.5,303.6 L1357.5,305.8 L1358.5,307.9 L1359.5,310.1 L1360.5,312.3 L1361.5,314.5 L1362.5,316.7 L1363.5,318.9 L1364.5,321.1 L1365.5,323.3 L1366.5,325.4 L1367.5,327.6 L1368.5,329.8 L1369.5,332.0 L1370.5,334.2 L1371.5,336.4 L1372.5,338.6 L1373.5,340.8 L1374.5,343.0 L1375.5,345.1 L1376.5,347.3 L1377.5,349.5" stroke="#0000ff" stroke-width="1" fill="none"/>
  </svg>
  <div class="abs" style="left:-8px;top:-131px;width:1356px;height:540px">
  <div class="yl" style="top:141px">2.0KV</div><div class="yl" style="top:177px">1.6KV</div><div class="yl" style="top:213px">1.2KV</div><div class="yl" style="top:248px">0.8KV</div><div class="yl" style="top:284px">0.4KV</div><div class="yl" style="top:320px">0.0KV</div><div class="yl" style="top:356px">-0.4KV</div><div class="yl" style="top:392px">-0.8KV</div><div class="yl" style="top:427px">-1.2KV</div><div class="yl" style="top:463px">-1.6KV</div><div class="yl" style="top:499px">-2.0KV</div>
  <div class="xl" style="left:17px">0µs</div><div class="xl" style="left:176px">5µs</div><div class="xl" style="left:335px">10µs</div><div class="xl" style="left:494px">15µs</div><div class="xl" style="left:654px">20µs</div><div class="xl" style="left:813px">25µs</div><div class="xl" style="left:972px">30µs</div><div class="xl" style="left:1131px">35µs</div><div class="xl" style="left:1290px">40µs</div>
  <div class="abs" style="left:298px;top:132px;font-size:13px;font-weight:bold;color:#00ff00;line-height:16px">V(n001)</div>
  <div class="abs" style="left:828px;top:132px;font-size:13px;font-weight:bold;color:#0000ff;line-height:16px">V(n003)</div>
  </div>
</div>
<div class="abs" style="left:0;top:535px;width:1356px;height:6px;background:#d8e4f0"></div>
<div class="abs" style="left:0;top:541px;width:1356px;height:1px;background:#eef3fb"></div>
<div class="abs" style="left:0;top:542px;width:1356px;height:1px;background:#2c2c2c"></div>
<div class="abs" style="left:0;top:543px;width:1356px;height:1px;background:#6a6a6a"></div>
<div class="abs" style="left:0;top:544px;width:1356px;height:1px;background:#f4f8fc"></div>
<!-- schematic child -->
<div class="abs" style="left:0;top:545px;width:1356px;height:28px;background:linear-gradient(180deg,#93afcf,#b9d3ec)"></div>
<div class="abs" style="left:0;top:573px;width:1356px;height:412px;background:#b9d1ea"></div>
<svg class="abs" style="left:9px;top:552px" width="13" height="17" viewBox="0 0 13 17" shape-rendering="crispEdges"><rect x="4" y="4" width="2" height="9" fill="#0000ff"/><path d="M1,8.5 H4" stroke="#0000ff" stroke-width="1.2"/><path d="M6,5.5 L10.5,1 M6,11 L11.5,16.5" stroke="#0000ff" stroke-width="1.2" shape-rendering="auto"/><path d="M7.5,14.5 L10.5,15.5 L10,12 Z" fill="#0000ff" shape-rendering="auto"/></svg>
<div class="abs" style="left:28px;top:555px;font-size:11.6px;line-height:14px;color:#000;white-space:pre">Reihenkreis.asc</div>
<div class="abs" style="left:6px;top:573px;width:1350px;height:2px;background:linear-gradient(180deg,#8a8a8a,#6a6a6a)"></div>
<div class="abs" style="left:6px;top:573px;width:2px;height:404px;background:linear-gradient(90deg,#9a9a9a,#6a6a6a)"></div>
<div class="abs" style="left:6px;top:977px;width:1350px;height:2px;background:#ffffff"></div>
<div class="abs" style="left:8px;top:575px;width:1348px;height:402px;background:#c0c0c0;overflow:hidden">
  <div class="abs" style="left:-8px;top:-575px;width:1356px;height:1008px">
  <svg class="abs" style="left:0;top:0" width="1356" height="1008">
<g fill="none" stroke="#0000ff" stroke-width="1" shape-rendering="crispEdges">
<path d="M634.5,963 V712 M634.5,663 V631.5 H932.5 V642 M932.5,682 V775 M932.5,826 V963 M1055.5,631 V764 M1055.5,816 V953"/>
</g>
<g fill="none" stroke="#0000ff" stroke-width="1.1">
<path d="M622.5,959.5 H647 L634.5,971.5 Z"/>
<path d="M1043.5,949.5 H1067 L1055.5,961.5 Z"/>
<path d="M920.5,959.5 H945 L932.5,971.5 Z"/>
</g>
<g fill="none" stroke="#000080" stroke-width="1">
<path d="M634.5,663 V668 M634.5,707 V712" shape-rendering="crispEdges"/>
<circle cx="634.5" cy="687.5" r="20"/>
<path d="M634.5,671 V681 M629,676.5 H640 M629,700.5 H640" shape-rendering="crispEdges"/>
<path d="M932.5,642 V659 M932.5,664 V682 M921,659.5 H943 M921,664.5 H943" shape-rendering="crispEdges"/>
</g>
<g id="coil1" fill="none" stroke="#000080" stroke-width="1">
<path d="M932.5,775.5 H930 Q921,777 921.5,785 Q922,790 925,793 Q921,797 921.5,801 Q922,806 925.5,809 Q921,813 921.5,818 Q922,824 930,826.5 H932.5"/>
<path d="M924.5,793 Q932,787.5 940,793 Q932,798 924.5,793"/>
<path d="M925,809 Q932,803.5 940,809 Q932,814 925,809"/>
<circle cx="936.5" cy="782.5" r="2"/>
</g>
<g fill="none" stroke="#000080" stroke-width="1">
<path d="M1055.5,764.5 H1053 Q1044,766 1044.5,774 Q1045,779 1048,782 Q1044,786 1044.5,790 Q1045,795 1048.5,798 Q1044,802 1044.5,807 Q1045,813 1053,815.5 H1055.5"/>
<path d="M1047.5,782 Q1055,776.5 1063,782 Q1055,787 1047.5,782"/>
<path d="M1048,798 Q1055,792.5 1063,798 Q1055,803 1048,798"/>
<circle cx="1059.5" cy="771.5" r="2"/>
</g>
<rect x="751.5" y="695.5" width="40" height="18" fill="#b5e61d" stroke="#000"/>
<rect x="751.5" y="731.5" width="40" height="18" fill="#00a2e8" stroke="#000"/>
<rect x="751.5" y="766.5" width="40" height="18" fill="#ed1c24" stroke="#000"/>
</svg>
<div class="st" style="left:639px;top:583px;letter-spacing:0.35px">.tran 50us</div>
<div class="st" style="left:487px;top:642px">PULSE(0 1000 0 1us 1us 5us)</div>
<div class="st" style="left:650px;top:654px">V1</div>
<div class="st" style="left:938px;top:638px">C2</div>
<div class="st" style="left:951px;top:654px">2000pF</div>
<div class="st" style="left:904px;top:777px">L1</div>
<div class="st" style="left:889px;top:803px">2mH</div>
<div class="st" style="left:1027px;top:767px">L3</div>
<div class="st" style="left:1012px;top:792px">2mH</div>
<div class="st" style="left:1096px;top:782px">K L1 L3 0.5</div>
<div class="abs" style="left:812px;top:696px;font-size:18px;font-weight:bold;line-height:20px;white-space:pre;letter-spacing:0.8px">U_V1</div>
<div class="abs" style="left:812px;top:733px;font-size:18px;font-weight:bold;line-height:20px;white-space:pre;letter-spacing:0.8px">U_L1</div>
<div class="abs" style="left:812px;top:767px;font-size:18px;font-weight:bold;line-height:20px;white-space:pre;letter-spacing:0.8px">U_L3</div>

  </div>
</div>
<div class="abs" style="left:0;top:985px;width:1356px;height:1px;background:#3cc8e8"></div>
<div class="abs" style="left:0;top:986px;width:1356px;height:1px;background:#101010"></div>
<div class="abs" style="left:0;top:987px;width:1356px;height:2px;background:#ffffff"></div>
<div class="abs" style="left:0;top:989px;width:1356px;height:1px;background:#9a9a9a"></div>
<div class="abs" style="left:0;top:990px;width:1356px;height:18px;background:#f0eeed"></div>
<div class="abs" style="left:-3px;top:993px;font-size:12px;line-height:14px;color:#000;white-space:pre;letter-spacing:-0.25px">x = 16.31µs</div><div class="abs" style="left:68px;top:993px;font-size:12px;line-height:14px;color:#000;white-space:pre;letter-spacing:-0.4px">y = 1.721KV</div>
</body></html>
